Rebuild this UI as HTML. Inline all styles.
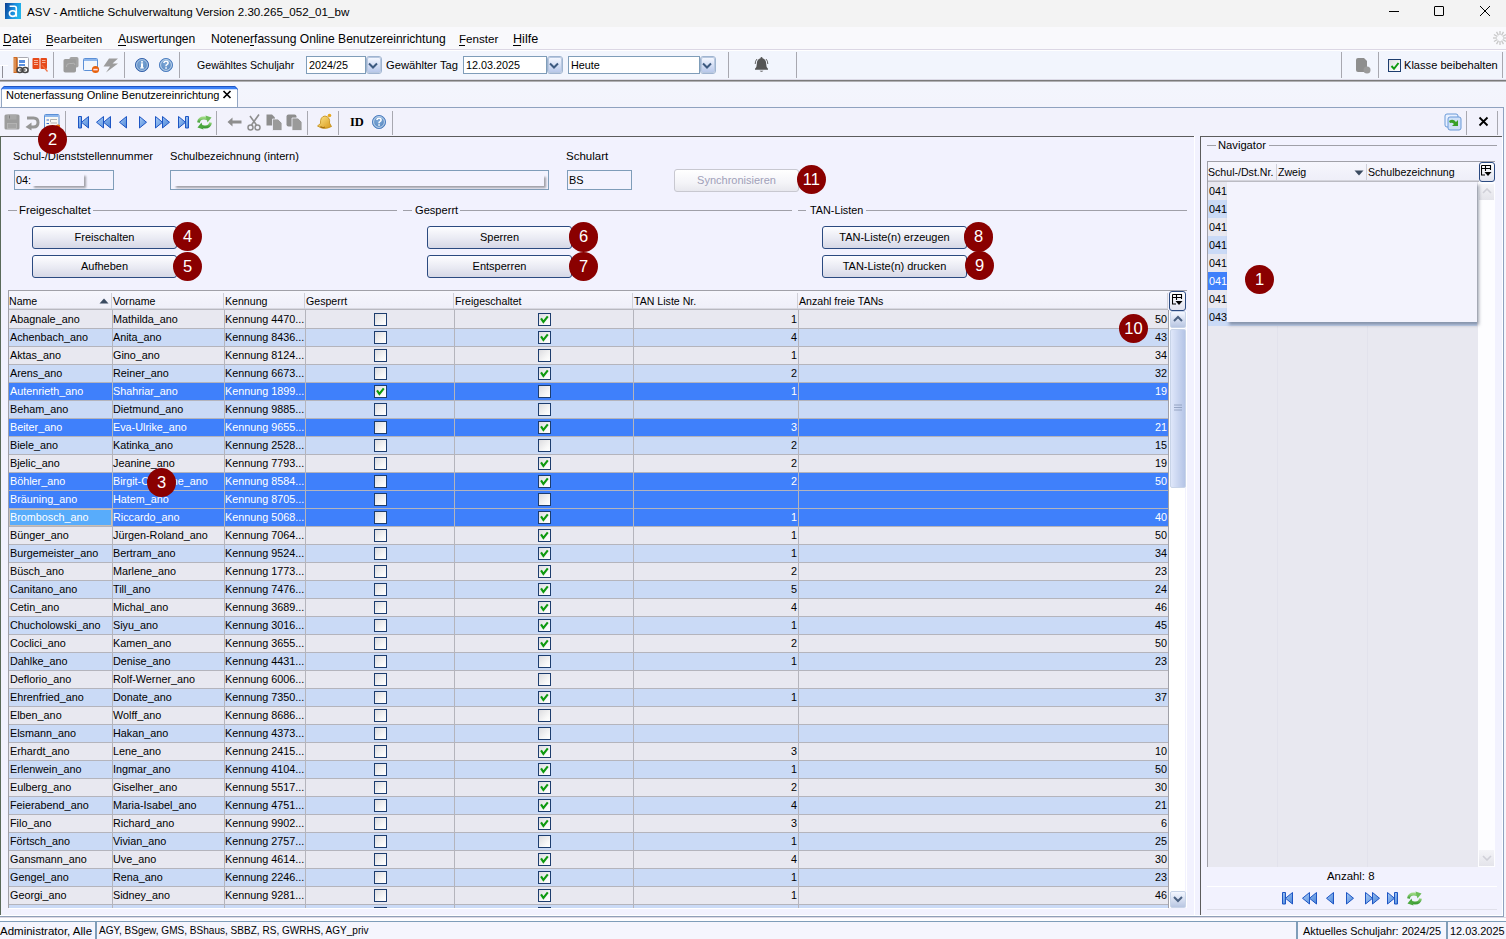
<!DOCTYPE html><html><head><meta charset="utf-8"><style>
html,body{margin:0;padding:0;}
body{width:1506px;height:939px;position:relative;overflow:hidden;background:#f2f2fe;font-family:'Liberation Sans',sans-serif;}
div{box-sizing:border-box;}
.ann{position:absolute;border-radius:50%;background:#8a0000;color:#fff;text-align:center;font-size:16.5px;font-family:'Liberation Sans',sans-serif;}
.btn{position:absolute;border:1px solid #2b4a80;border-radius:3px;background:linear-gradient(#fdfdff,#e9eaf3 55%,#d6d8e6);font-size:11px;text-align:center;color:#000;}
.cb{position:absolute;width:13px;height:13px;border:1px solid #1d3d6e;background:linear-gradient(135deg,#dcdce0,#f8f8f8 70%,#fff);}
.sep{position:absolute;width:1px;background:#a8a8b0;}
</style></head><body>
<div style="position:absolute;left:0px;top:0px;width:1506px;height:27px;background:#f3f3f3;"></div><svg style="position:absolute;left:5px;top:3px" width="16" height="16" viewBox="0 0 16 16"><defs><linearGradient id="lg" x1="0" y1="0" x2="1" y2="0.3"><stop offset="0" stop-color="#0a3d8f"/><stop offset="0.6" stop-color="#1a8ede"/><stop offset="1" stop-color="#22b4ea"/></linearGradient></defs><rect width="16" height="16" fill="url(#lg)"/><path d="M4.6 3.2 H9.4 Q11.3 3.2 11.3 5.2 V13.8" stroke="#fff" stroke-width="1.6" fill="none"/><ellipse cx="7.7" cy="10.6" rx="3.3" ry="2.8" stroke="#fff" stroke-width="1.6" fill="none"/></svg><div style="position:absolute;left:27px;top:6px;font-size:11.6px;line-height:1;color:#000;white-space:nowrap;">ASV - Amtliche Schulverwaltung Version 2.30.265_052_01_bw</div><div style="position:absolute;left:1389px;top:11px;width:10px;height:1px;background:#000;"></div><div style="position:absolute;left:1434px;top:6px;width:10px;height:10px;border:1px solid #000;border-radius:1px;"></div><svg style="position:absolute;left:1479px;top:5px" width="12" height="12" viewBox="0 0 12 12"><path d="M1 1 L11 11 M11 1 L1 11" stroke="#000" stroke-width="1"/></svg><div style="position:absolute;left:0px;top:27px;width:1506px;height:23px;background:#f9f9fc;border-bottom:1px solid #dcd7e4;"></div><div style="position:absolute;left:3px;top:33px;font-size:12.2px;line-height:1;color:#000;white-space:nowrap;">Datei</div><div style="position:absolute;left:46px;top:33px;font-size:11.6px;line-height:1;color:#000;white-space:nowrap;">Bearbeiten</div><div style="position:absolute;left:118px;top:33px;font-size:12.1px;line-height:1;color:#000;white-space:nowrap;">Auswertungen</div><div style="position:absolute;left:211px;top:33px;font-size:12.1px;line-height:1;color:#000;white-space:nowrap;">Notenerfassung Online Benutzereinrichtung</div><div style="position:absolute;left:459px;top:33px;font-size:11.6px;line-height:1;color:#000;white-space:nowrap;">Fenster</div><div style="position:absolute;left:513px;top:33px;font-size:12.6px;line-height:1;color:#000;white-space:nowrap;">Hilfe</div><div style="position:absolute;left:3px;top:45px;width:8px;height:1px;background:#000;"></div><div style="position:absolute;left:46px;top:45px;width:7px;height:1px;background:#000;"></div><div style="position:absolute;left:118px;top:45px;width:8px;height:1px;background:#000;"></div><div style="position:absolute;left:250px;top:45px;width:4px;height:1px;background:#000;"></div><div style="position:absolute;left:459px;top:45px;width:6px;height:1px;background:#000;"></div><div style="position:absolute;left:513px;top:45px;width:8px;height:1px;background:#000;"></div><svg style="position:absolute;left:1492px;top:28px" width="16" height="20" viewBox="0 0 16 20"><line x1="11.00" y1="10.00" x2="15.00" y2="10.00" stroke="#c8c8c8" stroke-width="1.3"/><line x1="10.60" y1="11.50" x2="14.06" y2="13.50" stroke="#c8c8c8" stroke-width="1.3"/><line x1="9.50" y1="12.60" x2="11.50" y2="16.06" stroke="#c8c8c8" stroke-width="1.3"/><line x1="8.00" y1="13.00" x2="8.00" y2="17.00" stroke="#c8c8c8" stroke-width="1.3"/><line x1="6.50" y1="12.60" x2="4.50" y2="16.06" stroke="#c8c8c8" stroke-width="1.3"/><line x1="5.40" y1="11.50" x2="1.94" y2="13.50" stroke="#c8c8c8" stroke-width="1.3"/><line x1="5.00" y1="10.00" x2="1.00" y2="10.00" stroke="#c8c8c8" stroke-width="1.3"/><line x1="5.40" y1="8.50" x2="1.94" y2="6.50" stroke="#c8c8c8" stroke-width="1.3"/><line x1="6.50" y1="7.40" x2="4.50" y2="3.94" stroke="#c8c8c8" stroke-width="1.3"/><line x1="8.00" y1="7.00" x2="8.00" y2="3.00" stroke="#c8c8c8" stroke-width="1.3"/><line x1="9.50" y1="7.40" x2="11.50" y2="3.94" stroke="#c8c8c8" stroke-width="1.3"/><line x1="10.60" y1="8.50" x2="14.06" y2="6.50" stroke="#c8c8c8" stroke-width="1.3"/></svg><div style="position:absolute;left:0px;top:50px;width:1506px;height:1px;background:#ffffff;"></div><div style="position:absolute;left:0px;top:51px;width:1506px;height:29px;background:#f2f5fd;"></div><div style="position:absolute;left:0px;top:79px;width:1506px;height:1px;background:#dcdae6;"></div><div style="position:absolute;left:0px;top:80px;width:1506px;height:1px;background:#7a7a7a;"></div><div style="position:absolute;left:0px;top:81px;width:1506px;height:1px;background:#b0b0b4;"></div><div style="position:absolute;left:2px;top:66px;width:1px;height:12px;background:#8e8e96;"></div><div style="position:absolute;left:0px;top:65px;width:8px;height:1px;background:#ffffff;"></div><div style="position:absolute;left:53px;top:52px;width:1px;height:26px;background:#a8a8b0;"></div><div style="position:absolute;left:124px;top:52px;width:1px;height:26px;background:#a8a8b0;"></div><div style="position:absolute;left:179px;top:52px;width:1px;height:26px;background:#a8a8b0;"></div><div style="position:absolute;left:728px;top:52px;width:1px;height:26px;background:#a8a8b0;"></div><div style="position:absolute;left:796px;top:52px;width:1px;height:26px;background:#a8a8b0;"></div><div style="position:absolute;left:1341px;top:52px;width:1px;height:26px;background:#a8a8b0;"></div><div style="position:absolute;left:1378px;top:52px;width:1px;height:26px;background:#a8a8b0;"></div><div style="position:absolute;left:1502px;top:52px;width:1px;height:26px;background:#a8a8b0;"></div><svg style="position:absolute;left:13px;top:57px" width="16" height="17" viewBox="0 0 16 17"><rect x="4.5" y="0.5" width="11" height="15" rx="0.8" fill="#fff" stroke="#a8a8b0"/><rect x="0.5" y="0" width="4" height="16" fill="#d06a20"/><path d="M0 2H3M0 4H3M0 6H3M0 8H3M0 10H3M0 12H3M0 14H3" stroke="#f0c8a0" stroke-width="0.8"/><rect x="6" y="3" width="6" height="3" fill="#5a90e0"/><rect x="6" y="7" width="6" height="2" fill="#5a90e0"/><rect x="4" y="10.5" width="5.5" height="5" rx="2.5" fill="none" stroke="#444" stroke-width="1.4"/><rect x="9.5" y="10.5" width="5.5" height="5" rx="2.5" fill="none" stroke="#444" stroke-width="1.4"/><path d="M6.5 13H12.5" stroke="#444" stroke-width="1.4"/></svg><svg style="position:absolute;left:32px;top:57px" width="17" height="17" viewBox="0 0 17 17"><rect x="0.5" y="1" width="7" height="11" rx="1" fill="#e64a1a"/><rect x="8.5" y="1" width="6.5" height="11" rx="1" fill="#e64a1a"/><path d="M2 3.5H6M2 5.5H6M2 7.5H6M10 3.5H13.5M10 5.5H13.5" stroke="#f8c0a8" stroke-width="0.9"/><path d="M10 8 L15.5 14.5" stroke="#f07040" stroke-width="1.2"/></svg><svg style="position:absolute;left:63px;top:57px" width="17" height="17" viewBox="0 0 17 17"><rect x="6.5" y="0" width="9" height="10.5" rx="1.8" fill="#a4a4a4"/><rect x="0.5" y="2" width="12.5" height="13.5" rx="1.8" fill="#9c9c9c"/><path d="M3.5 10 Q3 6.5 6.5 6.5 L9 6.5 Q11.5 5 12 8" stroke="#b4b4b4" stroke-width="1" fill="none"/></svg><svg style="position:absolute;left:83px;top:58px" width="17" height="16" viewBox="0 0 17 16"><rect x="0.5" y="0.5" width="14" height="12" rx="1" fill="#f2f6fc" stroke="#5b8fd6"/><rect x="1" y="1" width="13" height="2" fill="#8db6ec"/><circle cx="12.5" cy="11.5" r="3.6" fill="#e8620c"/><rect x="10.3" y="10.8" width="4.4" height="1.6" fill="#fde"/></svg><svg style="position:absolute;left:103px;top:58px" width="16" height="15" viewBox="0 0 16 15"><path d="M6 0.5 H15 L9.5 5.5 H15 L3 14.5 L7 8.5 H0.5 Z" fill="#9c9c9c"/></svg><svg style="position:absolute;left:135px;top:58px" width="15" height="15" viewBox="0 0 15 15"><defs><radialGradient id="bi" cx="0.45" cy="0.4" r="0.6"><stop offset="0" stop-color="#7aa6d6"/><stop offset="1" stop-color="#5a88c0"/></radialGradient></defs><circle cx="7" cy="7" r="6.6" fill="url(#bi)" stroke="#2f5ca8" stroke-width="0.9"/><circle cx="7" cy="7" r="5.4" fill="none" stroke="#c8dcf0" stroke-width="0.7"/><rect x="6" y="5.3" width="2" height="4.5" fill="#fff"/><rect x="5.2" y="9.3" width="3.6" height="1.2" fill="#fff"/><rect x="6" y="3.2" width="2" height="1.3" fill="#fff"/></svg><svg style="position:absolute;left:159px;top:58px" width="15" height="15" viewBox="0 0 15 15"><circle cx="7" cy="7" r="6.6" fill="url(#bi)" stroke="#4a7cc0" stroke-width="0.9"/><circle cx="7" cy="7" r="5.4" fill="none" stroke="#d8e8f8" stroke-width="0.8"/><path d="M4.9 5 Q5 3.2 7 3.2 Q9.1 3.2 9.1 4.9 Q9.1 6 7.9 6.6 Q7 7 7 8.2" stroke="#fff" stroke-width="1.5" fill="none"/><rect x="6.2" y="9.3" width="1.7" height="1.4" fill="#fff"/></svg><div style="position:absolute;left:197px;top:60px;font-size:10.6px;line-height:1;color:#000;white-space:nowrap;">Gewähltes Schuljahr</div><div style="position:absolute;left:306px;top:56px;width:60px;height:18px;background:#fff;border:1px solid #7f9db9;"></div><div style="position:absolute;left:309px;top:60px;font-size:10.8px;line-height:1;color:#000;white-space:nowrap;">2024/25</div><div style="position:absolute;left:366px;top:56px;width:16px;height:18px;border:1px solid #9fb4d0;border-radius:3px;background:#fff;"></div><div style="position:absolute;left:367px;top:57px;width:14px;height:16px;border:1px solid #b8c8e0;border-radius:2px;background:linear-gradient(#f4f7ff,#b8c8ea);"></div><svg style="position:absolute;left:368px;top:62px" width="10" height="8" viewBox="0 0 10 8"><path d="M1 1.5 L5 5.5 L9 1.5" stroke="#3d5a80" stroke-width="2" fill="none"/></svg><div style="position:absolute;left:386px;top:60px;font-size:11.2px;line-height:1;color:#000;white-space:nowrap;">Gewählter Tag</div><div style="position:absolute;left:463px;top:56px;width:84px;height:18px;background:#fff;border:1px solid #7f9db9;"></div><div style="position:absolute;left:466px;top:60px;font-size:10.8px;line-height:1;color:#000;white-space:nowrap;">12.03.2025</div><div style="position:absolute;left:547px;top:56px;width:16px;height:18px;border:1px solid #9fb4d0;border-radius:3px;background:#fff;"></div><div style="position:absolute;left:548px;top:57px;width:14px;height:16px;border:1px solid #b8c8e0;border-radius:2px;background:linear-gradient(#f4f7ff,#b8c8ea);"></div><svg style="position:absolute;left:549px;top:62px" width="10" height="8" viewBox="0 0 10 8"><path d="M1 1.5 L5 5.5 L9 1.5" stroke="#3d5a80" stroke-width="2" fill="none"/></svg><div style="position:absolute;left:568px;top:56px;width:132px;height:18px;background:#fff;border:1px solid #7f9db9;"></div><div style="position:absolute;left:571px;top:60px;font-size:10.8px;line-height:1;color:#000;white-space:nowrap;">Heute</div><div style="position:absolute;left:700px;top:56px;width:16px;height:18px;border:1px solid #9fb4d0;border-radius:3px;background:#fff;"></div><div style="position:absolute;left:701px;top:57px;width:14px;height:16px;border:1px solid #b8c8e0;border-radius:2px;background:linear-gradient(#f4f7ff,#b8c8ea);"></div><svg style="position:absolute;left:702px;top:62px" width="10" height="8" viewBox="0 0 10 8"><path d="M1 1.5 L5 5.5 L9 1.5" stroke="#3d5a80" stroke-width="2" fill="none"/></svg><svg style="position:absolute;left:753px;top:56px" width="17" height="18" viewBox="0 0 17 18"><path d="M8.5 1 Q9.5 1 9.5 2.3 Q13.2 3.2 13.2 8 Q13.2 11.5 15 12.8 V13.8 H2 V12.8 Q3.8 11.5 3.8 8 Q3.8 3.2 7.5 2.3 Q7.5 1 8.5 1Z" fill="#555"/><path d="M6.6 14.8 Q8.5 16.8 10.4 14.8Z" fill="#555"/><path d="M2.2 8 Q2.2 4.8 4 3M14.8 8 Q14.8 4.8 13 3" stroke="#666" stroke-width="1" fill="none"/></svg><svg style="position:absolute;left:1355px;top:57px" width="16" height="17" viewBox="0 0 16 17"><path d="M1 3 Q1 1 3 1 H9 L12 4 V13 Q12 15 10 15 H3 Q1 15 1 13Z" fill="#8e8e8e"/><circle cx="12" cy="13" r="3.5" fill="#9a9a9a"/></svg><div class="cb" style="left:1388px;top:59px;border-color:#1d3d6e;"></div><svg style="position:absolute;left:1390px;top:61px" width="10" height="10" viewBox="0 0 10 10"><path d="M1.5 5 L4 7.8 L8.5 2" stroke="#109a10" stroke-width="2" fill="none"/></svg><div style="position:absolute;left:1404px;top:60px;font-size:11.1px;line-height:1;color:#000;white-space:nowrap;">Klasse beibehalten</div><div style="position:absolute;left:0px;top:82px;width:1506px;height:25px;background:linear-gradient(#f3f5fd,#f3f4fc);"></div><svg style="position:absolute;left:0px;top:85px" width="240" height="23" viewBox="0 0 240 23"><path d="M1 23 V4 L4 1 H235 L238 4 V23Z" fill="#fff"/><rect x="1" y="4" width="1" height="19" fill="#93a6c3"/><rect x="237" y="4" width="1" height="19" fill="#93a6c3"/><path d="M1 4.2 L4 1 H235 L238 4.2Z" fill="#3a80f6"/><path d="M1.3 4.2 L4.2 1.5 H234.8 L237.7 4.2" stroke="#1f56c4" stroke-width="1" fill="none"/></svg><div style="position:absolute;left:0px;top:107px;width:1504px;height:1px;background:#8fa2bf;"></div><div style="position:absolute;left:6px;top:90px;font-size:11px;line-height:1;color:#000;white-space:nowrap;">Notenerfassung Online Benutzereinrichtung</div><svg style="position:absolute;left:222px;top:90px" width="10" height="9" viewBox="0 0 10 9"><path d="M1.5 1 L8.5 8 M8.5 1 L1.5 8" stroke="#000" stroke-width="1.7"/></svg><div style="position:absolute;left:0px;top:108px;width:1503px;height:28px;background:#f2f2fc;"></div><div style="position:absolute;left:0px;top:136px;width:1196px;height:1px;background:#5c5c5c;"></div><div style="position:absolute;left:65px;top:111px;width:1px;height:24px;background:#a8a8b0;"></div><div style="position:absolute;left:216px;top:111px;width:1px;height:24px;background:#a8a8b0;"></div><div style="position:absolute;left:307px;top:111px;width:1px;height:24px;background:#a8a8b0;"></div><div style="position:absolute;left:338px;top:111px;width:1px;height:24px;background:#a8a8b0;"></div><div style="position:absolute;left:392px;top:111px;width:1px;height:24px;background:#a8a8b0;"></div><div style="position:absolute;left:1466px;top:111px;width:1px;height:24px;background:#a8a8b0;"></div><div style="position:absolute;left:1497px;top:111px;width:1px;height:24px;background:#a8a8b0;"></div><svg style="position:absolute;left:4px;top:114px" width="16" height="16" viewBox="0 0 16 16"><path d="M0.5 2 Q0.5 0.5 2 0.5 H14 Q15.5 0.5 15.5 2 V14 Q15.5 15.5 14 15.5 H2 Q0.5 15.5 0.5 14Z" fill="#9c9c9c"/><rect x="3.5" y="0.5" width="9" height="5" fill="#a8a8a8"/><rect x="5" y="1.5" width="1" height="3" fill="#808080"/><rect x="3.5" y="9.5" width="9" height="5" fill="#a4a4a4" stroke="#b8b8b8" stroke-width="0.8"/></svg><svg style="position:absolute;left:25px;top:115px" width="15" height="16" viewBox="0 0 15 16"><path d="M2 3 H8.5 Q13 3 13 7.5 Q13 12 8.5 12 H6" stroke="#969696" stroke-width="3" fill="none"/><path d="M0.5 12 L6.5 7.5 V15.5Z" fill="#969696"/></svg><svg style="position:absolute;left:44px;top:114px" width="16" height="16" viewBox="0 0 16 16"><rect x="0.5" y="0.5" width="14.5" height="15" rx="1" fill="#f8f8f4" stroke="#5b8fd6"/><rect x="1" y="1" width="13.5" height="2" fill="#8db6ec"/><path d="M2.5 6H5M2.5 9.5H5" stroke="#3a6cd0" stroke-width="1.2"/><path d="M6.5 5.5H13M6.5 5.5V8M6.5 9H13" stroke="#aaa" stroke-width="0.9" fill="none"/><circle cx="14" cy="13" r="2.5" fill="#e8700c"/></svg><svg style="position:absolute;left:78px;top:116px" width="12" height="13" viewBox="0 0 12 13"><defs><linearGradient id="nb" x1="0" y1="0" x2="1" y2="1"><stop offset="0" stop-color="#a8ccf6"/><stop offset="1" stop-color="#4a84d8"/></linearGradient></defs><rect x="0.5" y="0.5" width="3" height="11.5" fill="url(#nb)" stroke="#1d55c4" stroke-width="1" stroke-linejoin="round"/><path d="M10.5 0.5 V12 L3.5 6.25Z" fill="url(#nb)" stroke="#1d55c4" stroke-width="1" stroke-linejoin="round"/></svg><svg style="position:absolute;left:96px;top:116px" width="16" height="13" viewBox="0 0 16 13"><path d="M7.5 0.5 V12 L0.5 6.25Z M14.5 0.5 V12 L7.5 6.25Z" fill="url(#nb)" stroke="#1d55c4" stroke-width="1" stroke-linejoin="round"/></svg><svg style="position:absolute;left:119px;top:116px" width="9" height="13" viewBox="0 0 9 13"><path d="M7.5 0.5 V12 L0.5 6.25Z" fill="url(#nb)" stroke="#1d55c4" stroke-width="1" stroke-linejoin="round"/></svg><svg style="position:absolute;left:139px;top:116px" width="9" height="13" viewBox="0 0 9 13"><path d="M0.5 0.5 V12 L7.5 6.25Z" fill="url(#nb)" stroke="#1d55c4" stroke-width="1" stroke-linejoin="round"/></svg><svg style="position:absolute;left:155px;top:116px" width="16" height="13" viewBox="0 0 16 13"><path d="M0.5 0.5 V12 L7.5 6.25Z M7.5 0.5 V12 L14.5 6.25Z" fill="url(#nb)" stroke="#1d55c4" stroke-width="1" stroke-linejoin="round"/></svg><svg style="position:absolute;left:178px;top:116px" width="12" height="13" viewBox="0 0 12 13"><path d="M0.5 0.5 V12 L7.5 6.25Z" fill="url(#nb)" stroke="#1d55c4" stroke-width="1" stroke-linejoin="round"/><rect x="7.5" y="0.5" width="3" height="11.5" fill="url(#nb)" stroke="#1d55c4" stroke-width="1" stroke-linejoin="round"/></svg><svg style="position:absolute;left:196px;top:114px" width="17" height="17" viewBox="0 0 17 17"><defs><linearGradient id="gr" x1="0" y1="0" x2="0" y2="1"><stop offset="0" stop-color="#9ad880"/><stop offset="1" stop-color="#3c9c34"/></linearGradient></defs><path d="M2.5 8.5 Q3 4 8 4 Q10 4 11.5 5" stroke="url(#gr)" stroke-width="2.8" fill="none"/><path d="M9.5 1.5 L15.5 3.5 L11.5 8.5Z" fill="#6cbc58"/><path d="M14.5 8.5 Q14 13 9 13 Q7 13 5.5 12" stroke="url(#gr)" stroke-width="2.8" fill="none"/><path d="M7.5 15.5 L1.5 13.5 L5.5 8.5Z" fill="#4aa83e"/></svg><svg style="position:absolute;left:227px;top:117px" width="15" height="10" viewBox="0 0 15 10"><path d="M0.5 5 L5.5 0.5 V3.5 H14.5 V6.5 H5.5 V9.5Z" fill="#8e8e8e"/></svg><svg style="position:absolute;left:247px;top:114px" width="14" height="17" viewBox="0 0 14 17"><path d="M4.5 11 L12 0.5 M9.5 11 L3 2" stroke="#8e8e8e" stroke-width="1.6" fill="none"/><circle cx="3.5" cy="13.5" r="2.5" fill="none" stroke="#8e8e8e" stroke-width="1.5"/><circle cx="10.5" cy="13.5" r="2.5" fill="none" stroke="#8e8e8e" stroke-width="1.5"/></svg><svg style="position:absolute;left:266px;top:114px" width="17" height="17" viewBox="0 0 17 17"><path d="M0.5 0.5 H6 L9 3.5 V11.5 H0.5Z" fill="#8e8e8e"/><path d="M6.5 5 H12 L16 9 V16.5 H6.5Z" fill="#9a9a9a" stroke="#f2f3fb" stroke-width="0.8"/></svg><svg style="position:absolute;left:286px;top:114px" width="17" height="17" viewBox="0 0 17 17"><rect x="0.5" y="0.5" width="10" height="12" rx="2" fill="#8e8e8e"/><path d="M6 4 H12 L16 8 V16.5 H6Z" fill="#9a9a9a" stroke="#f2f3fb" stroke-width="0.8"/></svg><svg style="position:absolute;left:316px;top:113px" width="17" height="18" viewBox="0 0 17 18"><defs><linearGradient id="bg2" x1="0" y1="0" x2="1" y2="1"><stop offset="0" stop-color="#fde890"/><stop offset="1" stop-color="#d89818"/></linearGradient></defs><path d="M9 3 Q14.5 4 13.5 10 L15.5 13.5 Q8 17.5 1.5 13 L4.5 10.5 Q4 3.5 9 3Z" fill="url(#bg2)" stroke="#c08a10" stroke-width="0.8"/><circle cx="13.5" cy="2.5" r="1.8" fill="#e8a820"/><path d="M4.5 13.5 Q6.5 15.5 9 14" stroke="#a87010" stroke-width="1.2" fill="none"/></svg><div style="position:absolute;left:350px;top:116px;font-family:'Liberation Serif',serif;font-weight:bold;font-size:12.5px;line-height:1;color:#000;">ID</div><svg style="position:absolute;left:372px;top:115px" width="15" height="15" viewBox="0 0 15 15"><circle cx="7" cy="7" r="6.6" fill="url(#bi)" stroke="#4a7cc0" stroke-width="0.9"/><circle cx="7" cy="7" r="5.4" fill="none" stroke="#d8e8f8" stroke-width="0.8"/><path d="M4.9 5 Q5 3.2 7 3.2 Q9.1 3.2 9.1 4.9 Q9.1 6 7.9 6.6 Q7 7 7 8.2" stroke="#fff" stroke-width="1.5" fill="none"/><rect x="6.2" y="9.3" width="1.7" height="1.4" fill="#fff"/></svg><svg style="position:absolute;left:1444px;top:113px" width="18" height="18" viewBox="0 0 18 18"><rect x="1" y="1" width="13" height="13" rx="2" fill="#e8f0ff" stroke="#6a9ad8"/><rect x="4" y="4" width="13" height="13" rx="2" fill="#cfe0f8" stroke="#6a9ad8"/><path d="M5 8 Q9 5 12 9 L14 7 V13 H8 L10 11 Q8 9 6 10Z" fill="#38a028"/></svg><svg style="position:absolute;left:1478px;top:116px" width="11" height="11" viewBox="0 0 11 11"><path d="M1.5 1.5 L9.5 9.5 M9.5 1.5 L1.5 9.5" stroke="#000" stroke-width="1.8"/></svg><div style="position:absolute;left:0px;top:137px;width:1194px;height:779px;background:#f2f2fe;"></div><div style="position:absolute;left:0px;top:136px;width:1px;height:780px;background:#5a6a5a;"></div><div style="position:absolute;left:13px;top:151px;font-size:11.2px;line-height:1;color:#000;white-space:nowrap;">Schul-/Dienststellennummer</div><div style="position:absolute;left:170px;top:151px;font-size:11.1px;line-height:1;color:#000;white-space:nowrap;">Schulbezeichnung (intern)</div><div style="position:absolute;left:566px;top:151px;font-size:11.5px;line-height:1;color:#000;white-space:nowrap;">Schulart</div><div style="position:absolute;left:14px;top:170px;width:100px;height:20px;background:#f3f3fe;border:1px solid #7f9db9;"></div><div style="position:absolute;left:16px;top:175px;font-size:10.9px;line-height:1;color:#000;white-space:nowrap;">04:</div><div style="position:absolute;left:32px;top:174px;width:52px;height:12px;background:#f3f3fe;box-shadow:2px 2px 2px #a0a0a8;"></div><div style="position:absolute;left:170px;top:170px;width:379px;height:20px;background:#f3f3fe;border:1px solid #7f9db9;"></div><div style="position:absolute;left:174px;top:175px;width:370px;height:11px;background:#f3f3fe;box-shadow:2px 2px 2px #a0a0a8;"></div><div style="position:absolute;left:567px;top:170px;width:65px;height:20px;background:#f3f3fe;border:1px solid #7f9db9;"></div><div style="position:absolute;left:569px;top:175px;font-size:10.9px;line-height:1;color:#000;white-space:nowrap;">BS</div><div class="btn" style="left:674px;top:169px;width:125px;height:23px;line-height:21px;border-color:#c8c8d0;background:linear-gradient(#ffffff,#f4f4f8 60%,#e8e8ee);color:#a0a0b8;">Synchronisieren</div><div style="position:absolute;left:8px;top:210px;width:9px;height:1px;background:#a0a0a8;"></div><div style="position:absolute;left:19px;top:205px;font-size:11.4px;line-height:1;color:#000;white-space:nowrap;">Freigeschaltet</div><div style="position:absolute;left:93px;top:210px;width:304px;height:1px;background:#a0a0a8;"></div><div style="position:absolute;left:403px;top:210px;width:9px;height:1px;background:#a0a0a8;"></div><div style="position:absolute;left:415px;top:205px;font-size:11.1px;line-height:1;color:#000;white-space:nowrap;">Gesperrt</div><div style="position:absolute;left:460px;top:210px;width:332px;height:1px;background:#a0a0a8;"></div><div style="position:absolute;left:798px;top:210px;width:8px;height:1px;background:#a0a0a8;"></div><div style="position:absolute;left:810px;top:205px;font-size:10.8px;line-height:1;color:#000;white-space:nowrap;">TAN-Listen</div><div style="position:absolute;left:866px;top:210px;width:321px;height:1px;background:#a0a0a8;"></div><div class="btn" style="left:32px;top:226px;width:145px;height:23px;line-height:21px;">Freischalten</div><div class="btn" style="left:32px;top:255px;width:145px;height:23px;line-height:21px;">Aufheben</div><div class="btn" style="left:427px;top:226px;width:145px;height:23px;line-height:21px;">Sperren</div><div class="btn" style="left:427px;top:255px;width:145px;height:23px;line-height:21px;">Entsperren</div><div class="btn" style="left:822px;top:226px;width:145px;height:23px;line-height:21px;">TAN-Liste(n) erzeugen</div><div class="btn" style="left:822px;top:255px;width:145px;height:23px;line-height:21px;">TAN-Liste(n) drucken</div><div style="position:absolute;left:8px;top:290px;width:1179px;height:1px;background:#a0a0a8;"></div><div style="position:absolute;left:8px;top:290px;width:1px;height:618px;background:#a0a0a8;"></div><div style="position:absolute;left:9px;top:291px;width:1159px;height:19px;background:linear-gradient(#f6f6fd,#eeeef8);"></div><div style="position:absolute;left:9px;top:308px;width:1159px;height:1px;background:#d8d8e0;"></div><div style="position:absolute;left:9px;top:309px;width:1159px;height:1px;background:#b8b8c0;"></div><div style="position:absolute;left:9px;top:296px;font-size:10.6px;line-height:1;color:#000;white-space:nowrap;">Name</div><div style="position:absolute;left:113px;top:296px;font-size:10.6px;line-height:1;color:#000;white-space:nowrap;">Vorname</div><div style="position:absolute;left:111px;top:293px;width:1px;height:16px;background:#d0d0d8;"></div><div style="position:absolute;left:225px;top:296px;font-size:10.6px;line-height:1;color:#000;white-space:nowrap;">Kennung</div><div style="position:absolute;left:223px;top:293px;width:1px;height:16px;background:#d0d0d8;"></div><div style="position:absolute;left:306px;top:296px;font-size:10.6px;line-height:1;color:#000;white-space:nowrap;">Gesperrt</div><div style="position:absolute;left:304px;top:293px;width:1px;height:16px;background:#d0d0d8;"></div><div style="position:absolute;left:455px;top:296px;font-size:10.6px;line-height:1;color:#000;white-space:nowrap;">Freigeschaltet</div><div style="position:absolute;left:453px;top:293px;width:1px;height:16px;background:#d0d0d8;"></div><div style="position:absolute;left:634px;top:296px;font-size:10.6px;line-height:1;color:#000;white-space:nowrap;">TAN Liste Nr.</div><div style="position:absolute;left:632px;top:293px;width:1px;height:16px;background:#d0d0d8;"></div><div style="position:absolute;left:799px;top:296px;font-size:10.6px;line-height:1;color:#000;white-space:nowrap;">Anzahl freie TANs</div><div style="position:absolute;left:797px;top:293px;width:1px;height:16px;background:#d0d0d8;"></div><svg style="position:absolute;left:99px;top:298px" width="10" height="6" viewBox="0 0 10 6"><path d="M0.5 5.5 L5 0.5 L9.5 5.5Z" fill="#3a4a60"/></svg><div style="position:absolute;left:1167px;top:293px;width:1px;height:16px;background:#d0d0d8;"></div><div style="position:absolute;left:1169px;top:291px;width:17px;height:20px;border:1px solid #2b4a80;border-radius:3px;background:linear-gradient(#fff,#e0e2ee);"></div><svg style="position:absolute;left:1172px;top:294px" width="11" height="13" viewBox="0 0 11 13"><path d="M0.5 0.5 H9.5 V5 M0.5 0.5 V10 H4 M0.5 3.5 H9.5 M4.5 0.5 V6" stroke="#000" stroke-width="1.1" fill="none"/><path d="M3.5 7 H10.5 L7 11Z" fill="#000"/></svg><div style="position:absolute;left:9px;top:310px;width:1159px;height:598px;overflow:hidden;"><div style="position:absolute;left:0;top:0;width:1159px;height:18px;background:#e8e8f0;"></div><div style="position:absolute;left:103px;top:0px;width:1px;height:18px;background:#b4b4bc;"></div><div style="position:absolute;left:215px;top:0px;width:1px;height:18px;background:#b4b4bc;"></div><div style="position:absolute;left:296px;top:0px;width:1px;height:18px;background:#b4b4bc;"></div><div style="position:absolute;left:445px;top:0px;width:1px;height:18px;background:#b4b4bc;"></div><div style="position:absolute;left:624px;top:0px;width:1px;height:18px;background:#b4b4bc;"></div><div style="position:absolute;left:789px;top:0px;width:1px;height:18px;background:#b4b4bc;"></div><div style="position:absolute;left:1px;top:4px;font-size:10.8px;line-height:1;color:#000;white-space:nowrap;">Abagnale_ano</div><div style="position:absolute;left:104px;top:4px;font-size:10.8px;line-height:1;color:#000;white-space:nowrap;">Mathilda_ano</div><div style="position:absolute;left:216px;top:4px;font-size:10.8px;line-height:1;color:#000;white-space:nowrap;">Kennung 4470...</div><div class="cb" style="left:365px;top:3px;"></div><div class="cb" style="left:529px;top:3px;"></div><svg style="position:absolute;left:531px;top:5px" width="9" height="9" viewBox="0 0 9 9"><path d="M1 3.4 L3.4 6.9 L7.8 1.4" stroke="#0e9a0e" stroke-width="2.1" fill="none"/></svg><div style="position:absolute;left:624px;top:4px;width:164px;text-align:right;font-size:10.8px;line-height:1;color:#000;">1</div><div style="position:absolute;left:789px;top:4px;width:369px;text-align:right;font-size:10.8px;line-height:1;color:#000;">50</div><div style="position:absolute;left:0;top:18px;width:1159px;height:18px;background:#cadaf6;border-top:1px solid #b4b4bc;"></div><div style="position:absolute;left:103px;top:18px;width:1px;height:18px;background:#b4b4bc;"></div><div style="position:absolute;left:215px;top:18px;width:1px;height:18px;background:#b4b4bc;"></div><div style="position:absolute;left:296px;top:18px;width:1px;height:18px;background:#b4b4bc;"></div><div style="position:absolute;left:445px;top:18px;width:1px;height:18px;background:#b4b4bc;"></div><div style="position:absolute;left:624px;top:18px;width:1px;height:18px;background:#b4b4bc;"></div><div style="position:absolute;left:789px;top:18px;width:1px;height:18px;background:#b4b4bc;"></div><div style="position:absolute;left:1px;top:22px;font-size:10.8px;line-height:1;color:#000;white-space:nowrap;">Achenbach_ano</div><div style="position:absolute;left:104px;top:22px;font-size:10.8px;line-height:1;color:#000;white-space:nowrap;">Anita_ano</div><div style="position:absolute;left:216px;top:22px;font-size:10.8px;line-height:1;color:#000;white-space:nowrap;">Kennung 8436...</div><div class="cb" style="left:365px;top:21px;"></div><div class="cb" style="left:529px;top:21px;"></div><svg style="position:absolute;left:531px;top:23px" width="9" height="9" viewBox="0 0 9 9"><path d="M1 3.4 L3.4 6.9 L7.8 1.4" stroke="#0e9a0e" stroke-width="2.1" fill="none"/></svg><div style="position:absolute;left:624px;top:22px;width:164px;text-align:right;font-size:10.8px;line-height:1;color:#000;">4</div><div style="position:absolute;left:789px;top:22px;width:369px;text-align:right;font-size:10.8px;line-height:1;color:#000;">43</div><div style="position:absolute;left:0;top:36px;width:1159px;height:18px;background:#e8e8f0;border-top:1px solid #b4b4bc;"></div><div style="position:absolute;left:103px;top:36px;width:1px;height:18px;background:#b4b4bc;"></div><div style="position:absolute;left:215px;top:36px;width:1px;height:18px;background:#b4b4bc;"></div><div style="position:absolute;left:296px;top:36px;width:1px;height:18px;background:#b4b4bc;"></div><div style="position:absolute;left:445px;top:36px;width:1px;height:18px;background:#b4b4bc;"></div><div style="position:absolute;left:624px;top:36px;width:1px;height:18px;background:#b4b4bc;"></div><div style="position:absolute;left:789px;top:36px;width:1px;height:18px;background:#b4b4bc;"></div><div style="position:absolute;left:1px;top:40px;font-size:10.8px;line-height:1;color:#000;white-space:nowrap;">Aktas_ano</div><div style="position:absolute;left:104px;top:40px;font-size:10.8px;line-height:1;color:#000;white-space:nowrap;">Gino_ano</div><div style="position:absolute;left:216px;top:40px;font-size:10.8px;line-height:1;color:#000;white-space:nowrap;">Kennung 8124...</div><div class="cb" style="left:365px;top:39px;"></div><div class="cb" style="left:529px;top:39px;"></div><div style="position:absolute;left:624px;top:40px;width:164px;text-align:right;font-size:10.8px;line-height:1;color:#000;">1</div><div style="position:absolute;left:789px;top:40px;width:369px;text-align:right;font-size:10.8px;line-height:1;color:#000;">34</div><div style="position:absolute;left:0;top:54px;width:1159px;height:18px;background:#cadaf6;border-top:1px solid #b4b4bc;"></div><div style="position:absolute;left:103px;top:54px;width:1px;height:18px;background:#b4b4bc;"></div><div style="position:absolute;left:215px;top:54px;width:1px;height:18px;background:#b4b4bc;"></div><div style="position:absolute;left:296px;top:54px;width:1px;height:18px;background:#b4b4bc;"></div><div style="position:absolute;left:445px;top:54px;width:1px;height:18px;background:#b4b4bc;"></div><div style="position:absolute;left:624px;top:54px;width:1px;height:18px;background:#b4b4bc;"></div><div style="position:absolute;left:789px;top:54px;width:1px;height:18px;background:#b4b4bc;"></div><div style="position:absolute;left:1px;top:58px;font-size:10.8px;line-height:1;color:#000;white-space:nowrap;">Arens_ano</div><div style="position:absolute;left:104px;top:58px;font-size:10.8px;line-height:1;color:#000;white-space:nowrap;">Reiner_ano</div><div style="position:absolute;left:216px;top:58px;font-size:10.8px;line-height:1;color:#000;white-space:nowrap;">Kennung 6673...</div><div class="cb" style="left:365px;top:57px;"></div><div class="cb" style="left:529px;top:57px;"></div><svg style="position:absolute;left:531px;top:59px" width="9" height="9" viewBox="0 0 9 9"><path d="M1 3.4 L3.4 6.9 L7.8 1.4" stroke="#0e9a0e" stroke-width="2.1" fill="none"/></svg><div style="position:absolute;left:624px;top:58px;width:164px;text-align:right;font-size:10.8px;line-height:1;color:#000;">2</div><div style="position:absolute;left:789px;top:58px;width:369px;text-align:right;font-size:10.8px;line-height:1;color:#000;">32</div><div style="position:absolute;left:0;top:72px;width:1159px;height:18px;background:#3f80fb;border-top:1px solid #b4b4bc;"></div><div style="position:absolute;left:103px;top:72px;width:1px;height:18px;background:#b4b4bc;"></div><div style="position:absolute;left:215px;top:72px;width:1px;height:18px;background:#b4b4bc;"></div><div style="position:absolute;left:296px;top:72px;width:1px;height:18px;background:#b4b4bc;"></div><div style="position:absolute;left:445px;top:72px;width:1px;height:18px;background:#b4b4bc;"></div><div style="position:absolute;left:624px;top:72px;width:1px;height:18px;background:#b4b4bc;"></div><div style="position:absolute;left:789px;top:72px;width:1px;height:18px;background:#b4b4bc;"></div><div style="position:absolute;left:1px;top:76px;font-size:10.8px;line-height:1;color:#fff;white-space:nowrap;">Autenrieth_ano</div><div style="position:absolute;left:104px;top:76px;font-size:10.8px;line-height:1;color:#fff;white-space:nowrap;">Shahriar_ano</div><div style="position:absolute;left:216px;top:76px;font-size:10.8px;line-height:1;color:#fff;white-space:nowrap;">Kennung 1899...</div><div class="cb" style="left:365px;top:75px;"></div><svg style="position:absolute;left:367px;top:77px" width="9" height="9" viewBox="0 0 9 9"><path d="M1 3.4 L3.4 6.9 L7.8 1.4" stroke="#0e9a0e" stroke-width="2.1" fill="none"/></svg><div class="cb" style="left:529px;top:75px;"></div><div style="position:absolute;left:624px;top:76px;width:164px;text-align:right;font-size:10.8px;line-height:1;color:#fff;">1</div><div style="position:absolute;left:789px;top:76px;width:369px;text-align:right;font-size:10.8px;line-height:1;color:#fff;">19</div><div style="position:absolute;left:0;top:90px;width:1159px;height:18px;background:#cadaf6;border-top:1px solid #b4b4bc;"></div><div style="position:absolute;left:103px;top:90px;width:1px;height:18px;background:#b4b4bc;"></div><div style="position:absolute;left:215px;top:90px;width:1px;height:18px;background:#b4b4bc;"></div><div style="position:absolute;left:296px;top:90px;width:1px;height:18px;background:#b4b4bc;"></div><div style="position:absolute;left:445px;top:90px;width:1px;height:18px;background:#b4b4bc;"></div><div style="position:absolute;left:624px;top:90px;width:1px;height:18px;background:#b4b4bc;"></div><div style="position:absolute;left:789px;top:90px;width:1px;height:18px;background:#b4b4bc;"></div><div style="position:absolute;left:1px;top:94px;font-size:10.8px;line-height:1;color:#000;white-space:nowrap;">Beham_ano</div><div style="position:absolute;left:104px;top:94px;font-size:10.8px;line-height:1;color:#000;white-space:nowrap;">Dietmund_ano</div><div style="position:absolute;left:216px;top:94px;font-size:10.8px;line-height:1;color:#000;white-space:nowrap;">Kennung 9885...</div><div class="cb" style="left:365px;top:93px;"></div><div class="cb" style="left:529px;top:93px;"></div><div style="position:absolute;left:0;top:108px;width:1159px;height:18px;background:#3f80fb;border-top:1px solid #b4b4bc;"></div><div style="position:absolute;left:103px;top:108px;width:1px;height:18px;background:#b4b4bc;"></div><div style="position:absolute;left:215px;top:108px;width:1px;height:18px;background:#b4b4bc;"></div><div style="position:absolute;left:296px;top:108px;width:1px;height:18px;background:#b4b4bc;"></div><div style="position:absolute;left:445px;top:108px;width:1px;height:18px;background:#b4b4bc;"></div><div style="position:absolute;left:624px;top:108px;width:1px;height:18px;background:#b4b4bc;"></div><div style="position:absolute;left:789px;top:108px;width:1px;height:18px;background:#b4b4bc;"></div><div style="position:absolute;left:1px;top:112px;font-size:10.8px;line-height:1;color:#fff;white-space:nowrap;">Beiter_ano</div><div style="position:absolute;left:104px;top:112px;font-size:10.8px;line-height:1;color:#fff;white-space:nowrap;">Eva-Ulrike_ano</div><div style="position:absolute;left:216px;top:112px;font-size:10.8px;line-height:1;color:#fff;white-space:nowrap;">Kennung 9655...</div><div class="cb" style="left:365px;top:111px;"></div><div class="cb" style="left:529px;top:111px;"></div><svg style="position:absolute;left:531px;top:113px" width="9" height="9" viewBox="0 0 9 9"><path d="M1 3.4 L3.4 6.9 L7.8 1.4" stroke="#0e9a0e" stroke-width="2.1" fill="none"/></svg><div style="position:absolute;left:624px;top:112px;width:164px;text-align:right;font-size:10.8px;line-height:1;color:#fff;">3</div><div style="position:absolute;left:789px;top:112px;width:369px;text-align:right;font-size:10.8px;line-height:1;color:#fff;">21</div><div style="position:absolute;left:0;top:126px;width:1159px;height:18px;background:#cadaf6;border-top:1px solid #b4b4bc;"></div><div style="position:absolute;left:103px;top:126px;width:1px;height:18px;background:#b4b4bc;"></div><div style="position:absolute;left:215px;top:126px;width:1px;height:18px;background:#b4b4bc;"></div><div style="position:absolute;left:296px;top:126px;width:1px;height:18px;background:#b4b4bc;"></div><div style="position:absolute;left:445px;top:126px;width:1px;height:18px;background:#b4b4bc;"></div><div style="position:absolute;left:624px;top:126px;width:1px;height:18px;background:#b4b4bc;"></div><div style="position:absolute;left:789px;top:126px;width:1px;height:18px;background:#b4b4bc;"></div><div style="position:absolute;left:1px;top:130px;font-size:10.8px;line-height:1;color:#000;white-space:nowrap;">Biele_ano</div><div style="position:absolute;left:104px;top:130px;font-size:10.8px;line-height:1;color:#000;white-space:nowrap;">Katinka_ano</div><div style="position:absolute;left:216px;top:130px;font-size:10.8px;line-height:1;color:#000;white-space:nowrap;">Kennung 2528...</div><div class="cb" style="left:365px;top:129px;"></div><div class="cb" style="left:529px;top:129px;"></div><div style="position:absolute;left:624px;top:130px;width:164px;text-align:right;font-size:10.8px;line-height:1;color:#000;">2</div><div style="position:absolute;left:789px;top:130px;width:369px;text-align:right;font-size:10.8px;line-height:1;color:#000;">15</div><div style="position:absolute;left:0;top:144px;width:1159px;height:18px;background:#e8e8f0;border-top:1px solid #b4b4bc;"></div><div style="position:absolute;left:103px;top:144px;width:1px;height:18px;background:#b4b4bc;"></div><div style="position:absolute;left:215px;top:144px;width:1px;height:18px;background:#b4b4bc;"></div><div style="position:absolute;left:296px;top:144px;width:1px;height:18px;background:#b4b4bc;"></div><div style="position:absolute;left:445px;top:144px;width:1px;height:18px;background:#b4b4bc;"></div><div style="position:absolute;left:624px;top:144px;width:1px;height:18px;background:#b4b4bc;"></div><div style="position:absolute;left:789px;top:144px;width:1px;height:18px;background:#b4b4bc;"></div><div style="position:absolute;left:1px;top:148px;font-size:10.8px;line-height:1;color:#000;white-space:nowrap;">Bjelic_ano</div><div style="position:absolute;left:104px;top:148px;font-size:10.8px;line-height:1;color:#000;white-space:nowrap;">Jeanine_ano</div><div style="position:absolute;left:216px;top:148px;font-size:10.8px;line-height:1;color:#000;white-space:nowrap;">Kennung 7793...</div><div class="cb" style="left:365px;top:147px;"></div><div class="cb" style="left:529px;top:147px;"></div><svg style="position:absolute;left:531px;top:149px" width="9" height="9" viewBox="0 0 9 9"><path d="M1 3.4 L3.4 6.9 L7.8 1.4" stroke="#0e9a0e" stroke-width="2.1" fill="none"/></svg><div style="position:absolute;left:624px;top:148px;width:164px;text-align:right;font-size:10.8px;line-height:1;color:#000;">2</div><div style="position:absolute;left:789px;top:148px;width:369px;text-align:right;font-size:10.8px;line-height:1;color:#000;">19</div><div style="position:absolute;left:0;top:162px;width:1159px;height:18px;background:#3f80fb;border-top:1px solid #b4b4bc;"></div><div style="position:absolute;left:103px;top:162px;width:1px;height:18px;background:#b4b4bc;"></div><div style="position:absolute;left:215px;top:162px;width:1px;height:18px;background:#b4b4bc;"></div><div style="position:absolute;left:296px;top:162px;width:1px;height:18px;background:#b4b4bc;"></div><div style="position:absolute;left:445px;top:162px;width:1px;height:18px;background:#b4b4bc;"></div><div style="position:absolute;left:624px;top:162px;width:1px;height:18px;background:#b4b4bc;"></div><div style="position:absolute;left:789px;top:162px;width:1px;height:18px;background:#b4b4bc;"></div><div style="position:absolute;left:1px;top:166px;font-size:10.8px;line-height:1;color:#fff;white-space:nowrap;">Böhler_ano</div><div style="position:absolute;left:104px;top:166px;font-size:10.8px;line-height:1;color:#fff;white-space:nowrap;">Birgit-Christine_ano</div><div style="position:absolute;left:216px;top:166px;font-size:10.8px;line-height:1;color:#fff;white-space:nowrap;">Kennung 8584...</div><div class="cb" style="left:365px;top:165px;"></div><div class="cb" style="left:529px;top:165px;"></div><svg style="position:absolute;left:531px;top:167px" width="9" height="9" viewBox="0 0 9 9"><path d="M1 3.4 L3.4 6.9 L7.8 1.4" stroke="#0e9a0e" stroke-width="2.1" fill="none"/></svg><div style="position:absolute;left:624px;top:166px;width:164px;text-align:right;font-size:10.8px;line-height:1;color:#fff;">2</div><div style="position:absolute;left:789px;top:166px;width:369px;text-align:right;font-size:10.8px;line-height:1;color:#fff;">50</div><div style="position:absolute;left:0;top:180px;width:1159px;height:18px;background:#3f80fb;border-top:1px solid #b4b4bc;"></div><div style="position:absolute;left:103px;top:180px;width:1px;height:18px;background:#b4b4bc;"></div><div style="position:absolute;left:215px;top:180px;width:1px;height:18px;background:#b4b4bc;"></div><div style="position:absolute;left:296px;top:180px;width:1px;height:18px;background:#b4b4bc;"></div><div style="position:absolute;left:445px;top:180px;width:1px;height:18px;background:#b4b4bc;"></div><div style="position:absolute;left:624px;top:180px;width:1px;height:18px;background:#b4b4bc;"></div><div style="position:absolute;left:789px;top:180px;width:1px;height:18px;background:#b4b4bc;"></div><div style="position:absolute;left:1px;top:184px;font-size:10.8px;line-height:1;color:#fff;white-space:nowrap;">Bräuning_ano</div><div style="position:absolute;left:104px;top:184px;font-size:10.8px;line-height:1;color:#fff;white-space:nowrap;">Hatem_ano</div><div style="position:absolute;left:216px;top:184px;font-size:10.8px;line-height:1;color:#fff;white-space:nowrap;">Kennung 8705...</div><div class="cb" style="left:365px;top:183px;"></div><div class="cb" style="left:529px;top:183px;"></div><div style="position:absolute;left:0;top:198px;width:1159px;height:18px;background:#3f80fb;border-top:1px solid #b4b4bc;"></div><div style="position:absolute;left:103px;top:198px;width:1px;height:18px;background:#b4b4bc;"></div><div style="position:absolute;left:215px;top:198px;width:1px;height:18px;background:#b4b4bc;"></div><div style="position:absolute;left:296px;top:198px;width:1px;height:18px;background:#b4b4bc;"></div><div style="position:absolute;left:445px;top:198px;width:1px;height:18px;background:#b4b4bc;"></div><div style="position:absolute;left:624px;top:198px;width:1px;height:18px;background:#b4b4bc;"></div><div style="position:absolute;left:789px;top:198px;width:1px;height:18px;background:#b4b4bc;"></div><div style="position:absolute;left:0;top:199px;width:103px;height:17px;background:#58acfb;border:1px solid #c8beb4;"></div><div style="position:absolute;left:1px;top:202px;font-size:10.8px;line-height:1;color:#fff;white-space:nowrap;">Brombosch_ano</div><div style="position:absolute;left:104px;top:202px;font-size:10.8px;line-height:1;color:#fff;white-space:nowrap;">Riccardo_ano</div><div style="position:absolute;left:216px;top:202px;font-size:10.8px;line-height:1;color:#fff;white-space:nowrap;">Kennung 5068...</div><div class="cb" style="left:365px;top:201px;"></div><div class="cb" style="left:529px;top:201px;"></div><svg style="position:absolute;left:531px;top:203px" width="9" height="9" viewBox="0 0 9 9"><path d="M1 3.4 L3.4 6.9 L7.8 1.4" stroke="#0e9a0e" stroke-width="2.1" fill="none"/></svg><div style="position:absolute;left:624px;top:202px;width:164px;text-align:right;font-size:10.8px;line-height:1;color:#fff;">1</div><div style="position:absolute;left:789px;top:202px;width:369px;text-align:right;font-size:10.8px;line-height:1;color:#fff;">40</div><div style="position:absolute;left:0;top:216px;width:1159px;height:18px;background:#e8e8f0;border-top:1px solid #b4b4bc;"></div><div style="position:absolute;left:103px;top:216px;width:1px;height:18px;background:#b4b4bc;"></div><div style="position:absolute;left:215px;top:216px;width:1px;height:18px;background:#b4b4bc;"></div><div style="position:absolute;left:296px;top:216px;width:1px;height:18px;background:#b4b4bc;"></div><div style="position:absolute;left:445px;top:216px;width:1px;height:18px;background:#b4b4bc;"></div><div style="position:absolute;left:624px;top:216px;width:1px;height:18px;background:#b4b4bc;"></div><div style="position:absolute;left:789px;top:216px;width:1px;height:18px;background:#b4b4bc;"></div><div style="position:absolute;left:1px;top:220px;font-size:10.8px;line-height:1;color:#000;white-space:nowrap;">Bünger_ano</div><div style="position:absolute;left:104px;top:220px;font-size:10.8px;line-height:1;color:#000;white-space:nowrap;">Jürgen-Roland_ano</div><div style="position:absolute;left:216px;top:220px;font-size:10.8px;line-height:1;color:#000;white-space:nowrap;">Kennung 7064...</div><div class="cb" style="left:365px;top:219px;"></div><div class="cb" style="left:529px;top:219px;"></div><svg style="position:absolute;left:531px;top:221px" width="9" height="9" viewBox="0 0 9 9"><path d="M1 3.4 L3.4 6.9 L7.8 1.4" stroke="#0e9a0e" stroke-width="2.1" fill="none"/></svg><div style="position:absolute;left:624px;top:220px;width:164px;text-align:right;font-size:10.8px;line-height:1;color:#000;">1</div><div style="position:absolute;left:789px;top:220px;width:369px;text-align:right;font-size:10.8px;line-height:1;color:#000;">50</div><div style="position:absolute;left:0;top:234px;width:1159px;height:18px;background:#cadaf6;border-top:1px solid #b4b4bc;"></div><div style="position:absolute;left:103px;top:234px;width:1px;height:18px;background:#b4b4bc;"></div><div style="position:absolute;left:215px;top:234px;width:1px;height:18px;background:#b4b4bc;"></div><div style="position:absolute;left:296px;top:234px;width:1px;height:18px;background:#b4b4bc;"></div><div style="position:absolute;left:445px;top:234px;width:1px;height:18px;background:#b4b4bc;"></div><div style="position:absolute;left:624px;top:234px;width:1px;height:18px;background:#b4b4bc;"></div><div style="position:absolute;left:789px;top:234px;width:1px;height:18px;background:#b4b4bc;"></div><div style="position:absolute;left:1px;top:238px;font-size:10.8px;line-height:1;color:#000;white-space:nowrap;">Burgemeister_ano</div><div style="position:absolute;left:104px;top:238px;font-size:10.8px;line-height:1;color:#000;white-space:nowrap;">Bertram_ano</div><div style="position:absolute;left:216px;top:238px;font-size:10.8px;line-height:1;color:#000;white-space:nowrap;">Kennung 9524...</div><div class="cb" style="left:365px;top:237px;"></div><div class="cb" style="left:529px;top:237px;"></div><svg style="position:absolute;left:531px;top:239px" width="9" height="9" viewBox="0 0 9 9"><path d="M1 3.4 L3.4 6.9 L7.8 1.4" stroke="#0e9a0e" stroke-width="2.1" fill="none"/></svg><div style="position:absolute;left:624px;top:238px;width:164px;text-align:right;font-size:10.8px;line-height:1;color:#000;">1</div><div style="position:absolute;left:789px;top:238px;width:369px;text-align:right;font-size:10.8px;line-height:1;color:#000;">34</div><div style="position:absolute;left:0;top:252px;width:1159px;height:18px;background:#e8e8f0;border-top:1px solid #b4b4bc;"></div><div style="position:absolute;left:103px;top:252px;width:1px;height:18px;background:#b4b4bc;"></div><div style="position:absolute;left:215px;top:252px;width:1px;height:18px;background:#b4b4bc;"></div><div style="position:absolute;left:296px;top:252px;width:1px;height:18px;background:#b4b4bc;"></div><div style="position:absolute;left:445px;top:252px;width:1px;height:18px;background:#b4b4bc;"></div><div style="position:absolute;left:624px;top:252px;width:1px;height:18px;background:#b4b4bc;"></div><div style="position:absolute;left:789px;top:252px;width:1px;height:18px;background:#b4b4bc;"></div><div style="position:absolute;left:1px;top:256px;font-size:10.8px;line-height:1;color:#000;white-space:nowrap;">Büsch_ano</div><div style="position:absolute;left:104px;top:256px;font-size:10.8px;line-height:1;color:#000;white-space:nowrap;">Marlene_ano</div><div style="position:absolute;left:216px;top:256px;font-size:10.8px;line-height:1;color:#000;white-space:nowrap;">Kennung 1773...</div><div class="cb" style="left:365px;top:255px;"></div><div class="cb" style="left:529px;top:255px;"></div><svg style="position:absolute;left:531px;top:257px" width="9" height="9" viewBox="0 0 9 9"><path d="M1 3.4 L3.4 6.9 L7.8 1.4" stroke="#0e9a0e" stroke-width="2.1" fill="none"/></svg><div style="position:absolute;left:624px;top:256px;width:164px;text-align:right;font-size:10.8px;line-height:1;color:#000;">2</div><div style="position:absolute;left:789px;top:256px;width:369px;text-align:right;font-size:10.8px;line-height:1;color:#000;">23</div><div style="position:absolute;left:0;top:270px;width:1159px;height:18px;background:#cadaf6;border-top:1px solid #b4b4bc;"></div><div style="position:absolute;left:103px;top:270px;width:1px;height:18px;background:#b4b4bc;"></div><div style="position:absolute;left:215px;top:270px;width:1px;height:18px;background:#b4b4bc;"></div><div style="position:absolute;left:296px;top:270px;width:1px;height:18px;background:#b4b4bc;"></div><div style="position:absolute;left:445px;top:270px;width:1px;height:18px;background:#b4b4bc;"></div><div style="position:absolute;left:624px;top:270px;width:1px;height:18px;background:#b4b4bc;"></div><div style="position:absolute;left:789px;top:270px;width:1px;height:18px;background:#b4b4bc;"></div><div style="position:absolute;left:1px;top:274px;font-size:10.8px;line-height:1;color:#000;white-space:nowrap;">Canitano_ano</div><div style="position:absolute;left:104px;top:274px;font-size:10.8px;line-height:1;color:#000;white-space:nowrap;">Till_ano</div><div style="position:absolute;left:216px;top:274px;font-size:10.8px;line-height:1;color:#000;white-space:nowrap;">Kennung 7476...</div><div class="cb" style="left:365px;top:273px;"></div><div class="cb" style="left:529px;top:273px;"></div><svg style="position:absolute;left:531px;top:275px" width="9" height="9" viewBox="0 0 9 9"><path d="M1 3.4 L3.4 6.9 L7.8 1.4" stroke="#0e9a0e" stroke-width="2.1" fill="none"/></svg><div style="position:absolute;left:624px;top:274px;width:164px;text-align:right;font-size:10.8px;line-height:1;color:#000;">5</div><div style="position:absolute;left:789px;top:274px;width:369px;text-align:right;font-size:10.8px;line-height:1;color:#000;">24</div><div style="position:absolute;left:0;top:288px;width:1159px;height:18px;background:#e8e8f0;border-top:1px solid #b4b4bc;"></div><div style="position:absolute;left:103px;top:288px;width:1px;height:18px;background:#b4b4bc;"></div><div style="position:absolute;left:215px;top:288px;width:1px;height:18px;background:#b4b4bc;"></div><div style="position:absolute;left:296px;top:288px;width:1px;height:18px;background:#b4b4bc;"></div><div style="position:absolute;left:445px;top:288px;width:1px;height:18px;background:#b4b4bc;"></div><div style="position:absolute;left:624px;top:288px;width:1px;height:18px;background:#b4b4bc;"></div><div style="position:absolute;left:789px;top:288px;width:1px;height:18px;background:#b4b4bc;"></div><div style="position:absolute;left:1px;top:292px;font-size:10.8px;line-height:1;color:#000;white-space:nowrap;">Cetin_ano</div><div style="position:absolute;left:104px;top:292px;font-size:10.8px;line-height:1;color:#000;white-space:nowrap;">Michal_ano</div><div style="position:absolute;left:216px;top:292px;font-size:10.8px;line-height:1;color:#000;white-space:nowrap;">Kennung 3689...</div><div class="cb" style="left:365px;top:291px;"></div><div class="cb" style="left:529px;top:291px;"></div><svg style="position:absolute;left:531px;top:293px" width="9" height="9" viewBox="0 0 9 9"><path d="M1 3.4 L3.4 6.9 L7.8 1.4" stroke="#0e9a0e" stroke-width="2.1" fill="none"/></svg><div style="position:absolute;left:624px;top:292px;width:164px;text-align:right;font-size:10.8px;line-height:1;color:#000;">4</div><div style="position:absolute;left:789px;top:292px;width:369px;text-align:right;font-size:10.8px;line-height:1;color:#000;">46</div><div style="position:absolute;left:0;top:306px;width:1159px;height:18px;background:#cadaf6;border-top:1px solid #b4b4bc;"></div><div style="position:absolute;left:103px;top:306px;width:1px;height:18px;background:#b4b4bc;"></div><div style="position:absolute;left:215px;top:306px;width:1px;height:18px;background:#b4b4bc;"></div><div style="position:absolute;left:296px;top:306px;width:1px;height:18px;background:#b4b4bc;"></div><div style="position:absolute;left:445px;top:306px;width:1px;height:18px;background:#b4b4bc;"></div><div style="position:absolute;left:624px;top:306px;width:1px;height:18px;background:#b4b4bc;"></div><div style="position:absolute;left:789px;top:306px;width:1px;height:18px;background:#b4b4bc;"></div><div style="position:absolute;left:1px;top:310px;font-size:10.8px;line-height:1;color:#000;white-space:nowrap;">Chucholowski_ano</div><div style="position:absolute;left:104px;top:310px;font-size:10.8px;line-height:1;color:#000;white-space:nowrap;">Siyu_ano</div><div style="position:absolute;left:216px;top:310px;font-size:10.8px;line-height:1;color:#000;white-space:nowrap;">Kennung 3016...</div><div class="cb" style="left:365px;top:309px;"></div><div class="cb" style="left:529px;top:309px;"></div><svg style="position:absolute;left:531px;top:311px" width="9" height="9" viewBox="0 0 9 9"><path d="M1 3.4 L3.4 6.9 L7.8 1.4" stroke="#0e9a0e" stroke-width="2.1" fill="none"/></svg><div style="position:absolute;left:624px;top:310px;width:164px;text-align:right;font-size:10.8px;line-height:1;color:#000;">1</div><div style="position:absolute;left:789px;top:310px;width:369px;text-align:right;font-size:10.8px;line-height:1;color:#000;">45</div><div style="position:absolute;left:0;top:324px;width:1159px;height:18px;background:#e8e8f0;border-top:1px solid #b4b4bc;"></div><div style="position:absolute;left:103px;top:324px;width:1px;height:18px;background:#b4b4bc;"></div><div style="position:absolute;left:215px;top:324px;width:1px;height:18px;background:#b4b4bc;"></div><div style="position:absolute;left:296px;top:324px;width:1px;height:18px;background:#b4b4bc;"></div><div style="position:absolute;left:445px;top:324px;width:1px;height:18px;background:#b4b4bc;"></div><div style="position:absolute;left:624px;top:324px;width:1px;height:18px;background:#b4b4bc;"></div><div style="position:absolute;left:789px;top:324px;width:1px;height:18px;background:#b4b4bc;"></div><div style="position:absolute;left:1px;top:328px;font-size:10.8px;line-height:1;color:#000;white-space:nowrap;">Coclici_ano</div><div style="position:absolute;left:104px;top:328px;font-size:10.8px;line-height:1;color:#000;white-space:nowrap;">Kamen_ano</div><div style="position:absolute;left:216px;top:328px;font-size:10.8px;line-height:1;color:#000;white-space:nowrap;">Kennung 3655...</div><div class="cb" style="left:365px;top:327px;"></div><div class="cb" style="left:529px;top:327px;"></div><svg style="position:absolute;left:531px;top:329px" width="9" height="9" viewBox="0 0 9 9"><path d="M1 3.4 L3.4 6.9 L7.8 1.4" stroke="#0e9a0e" stroke-width="2.1" fill="none"/></svg><div style="position:absolute;left:624px;top:328px;width:164px;text-align:right;font-size:10.8px;line-height:1;color:#000;">2</div><div style="position:absolute;left:789px;top:328px;width:369px;text-align:right;font-size:10.8px;line-height:1;color:#000;">50</div><div style="position:absolute;left:0;top:342px;width:1159px;height:18px;background:#cadaf6;border-top:1px solid #b4b4bc;"></div><div style="position:absolute;left:103px;top:342px;width:1px;height:18px;background:#b4b4bc;"></div><div style="position:absolute;left:215px;top:342px;width:1px;height:18px;background:#b4b4bc;"></div><div style="position:absolute;left:296px;top:342px;width:1px;height:18px;background:#b4b4bc;"></div><div style="position:absolute;left:445px;top:342px;width:1px;height:18px;background:#b4b4bc;"></div><div style="position:absolute;left:624px;top:342px;width:1px;height:18px;background:#b4b4bc;"></div><div style="position:absolute;left:789px;top:342px;width:1px;height:18px;background:#b4b4bc;"></div><div style="position:absolute;left:1px;top:346px;font-size:10.8px;line-height:1;color:#000;white-space:nowrap;">Dahlke_ano</div><div style="position:absolute;left:104px;top:346px;font-size:10.8px;line-height:1;color:#000;white-space:nowrap;">Denise_ano</div><div style="position:absolute;left:216px;top:346px;font-size:10.8px;line-height:1;color:#000;white-space:nowrap;">Kennung 4431...</div><div class="cb" style="left:365px;top:345px;"></div><div class="cb" style="left:529px;top:345px;"></div><div style="position:absolute;left:624px;top:346px;width:164px;text-align:right;font-size:10.8px;line-height:1;color:#000;">1</div><div style="position:absolute;left:789px;top:346px;width:369px;text-align:right;font-size:10.8px;line-height:1;color:#000;">23</div><div style="position:absolute;left:0;top:360px;width:1159px;height:18px;background:#e8e8f0;border-top:1px solid #b4b4bc;"></div><div style="position:absolute;left:103px;top:360px;width:1px;height:18px;background:#b4b4bc;"></div><div style="position:absolute;left:215px;top:360px;width:1px;height:18px;background:#b4b4bc;"></div><div style="position:absolute;left:296px;top:360px;width:1px;height:18px;background:#b4b4bc;"></div><div style="position:absolute;left:445px;top:360px;width:1px;height:18px;background:#b4b4bc;"></div><div style="position:absolute;left:624px;top:360px;width:1px;height:18px;background:#b4b4bc;"></div><div style="position:absolute;left:789px;top:360px;width:1px;height:18px;background:#b4b4bc;"></div><div style="position:absolute;left:1px;top:364px;font-size:10.8px;line-height:1;color:#000;white-space:nowrap;">Deflorio_ano</div><div style="position:absolute;left:104px;top:364px;font-size:10.8px;line-height:1;color:#000;white-space:nowrap;">Rolf-Werner_ano</div><div style="position:absolute;left:216px;top:364px;font-size:10.8px;line-height:1;color:#000;white-space:nowrap;">Kennung 6006...</div><div class="cb" style="left:365px;top:363px;"></div><div class="cb" style="left:529px;top:363px;"></div><div style="position:absolute;left:0;top:378px;width:1159px;height:18px;background:#cadaf6;border-top:1px solid #b4b4bc;"></div><div style="position:absolute;left:103px;top:378px;width:1px;height:18px;background:#b4b4bc;"></div><div style="position:absolute;left:215px;top:378px;width:1px;height:18px;background:#b4b4bc;"></div><div style="position:absolute;left:296px;top:378px;width:1px;height:18px;background:#b4b4bc;"></div><div style="position:absolute;left:445px;top:378px;width:1px;height:18px;background:#b4b4bc;"></div><div style="position:absolute;left:624px;top:378px;width:1px;height:18px;background:#b4b4bc;"></div><div style="position:absolute;left:789px;top:378px;width:1px;height:18px;background:#b4b4bc;"></div><div style="position:absolute;left:1px;top:382px;font-size:10.8px;line-height:1;color:#000;white-space:nowrap;">Ehrenfried_ano</div><div style="position:absolute;left:104px;top:382px;font-size:10.8px;line-height:1;color:#000;white-space:nowrap;">Donate_ano</div><div style="position:absolute;left:216px;top:382px;font-size:10.8px;line-height:1;color:#000;white-space:nowrap;">Kennung 7350...</div><div class="cb" style="left:365px;top:381px;"></div><div class="cb" style="left:529px;top:381px;"></div><svg style="position:absolute;left:531px;top:383px" width="9" height="9" viewBox="0 0 9 9"><path d="M1 3.4 L3.4 6.9 L7.8 1.4" stroke="#0e9a0e" stroke-width="2.1" fill="none"/></svg><div style="position:absolute;left:624px;top:382px;width:164px;text-align:right;font-size:10.8px;line-height:1;color:#000;">1</div><div style="position:absolute;left:789px;top:382px;width:369px;text-align:right;font-size:10.8px;line-height:1;color:#000;">37</div><div style="position:absolute;left:0;top:396px;width:1159px;height:18px;background:#e8e8f0;border-top:1px solid #b4b4bc;"></div><div style="position:absolute;left:103px;top:396px;width:1px;height:18px;background:#b4b4bc;"></div><div style="position:absolute;left:215px;top:396px;width:1px;height:18px;background:#b4b4bc;"></div><div style="position:absolute;left:296px;top:396px;width:1px;height:18px;background:#b4b4bc;"></div><div style="position:absolute;left:445px;top:396px;width:1px;height:18px;background:#b4b4bc;"></div><div style="position:absolute;left:624px;top:396px;width:1px;height:18px;background:#b4b4bc;"></div><div style="position:absolute;left:789px;top:396px;width:1px;height:18px;background:#b4b4bc;"></div><div style="position:absolute;left:1px;top:400px;font-size:10.8px;line-height:1;color:#000;white-space:nowrap;">Elben_ano</div><div style="position:absolute;left:104px;top:400px;font-size:10.8px;line-height:1;color:#000;white-space:nowrap;">Wolff_ano</div><div style="position:absolute;left:216px;top:400px;font-size:10.8px;line-height:1;color:#000;white-space:nowrap;">Kennung 8686...</div><div class="cb" style="left:365px;top:399px;"></div><div class="cb" style="left:529px;top:399px;"></div><div style="position:absolute;left:0;top:414px;width:1159px;height:18px;background:#cadaf6;border-top:1px solid #b4b4bc;"></div><div style="position:absolute;left:103px;top:414px;width:1px;height:18px;background:#b4b4bc;"></div><div style="position:absolute;left:215px;top:414px;width:1px;height:18px;background:#b4b4bc;"></div><div style="position:absolute;left:296px;top:414px;width:1px;height:18px;background:#b4b4bc;"></div><div style="position:absolute;left:445px;top:414px;width:1px;height:18px;background:#b4b4bc;"></div><div style="position:absolute;left:624px;top:414px;width:1px;height:18px;background:#b4b4bc;"></div><div style="position:absolute;left:789px;top:414px;width:1px;height:18px;background:#b4b4bc;"></div><div style="position:absolute;left:1px;top:418px;font-size:10.8px;line-height:1;color:#000;white-space:nowrap;">Elsmann_ano</div><div style="position:absolute;left:104px;top:418px;font-size:10.8px;line-height:1;color:#000;white-space:nowrap;">Hakan_ano</div><div style="position:absolute;left:216px;top:418px;font-size:10.8px;line-height:1;color:#000;white-space:nowrap;">Kennung 4373...</div><div class="cb" style="left:365px;top:417px;"></div><div class="cb" style="left:529px;top:417px;"></div><div style="position:absolute;left:0;top:432px;width:1159px;height:18px;background:#e8e8f0;border-top:1px solid #b4b4bc;"></div><div style="position:absolute;left:103px;top:432px;width:1px;height:18px;background:#b4b4bc;"></div><div style="position:absolute;left:215px;top:432px;width:1px;height:18px;background:#b4b4bc;"></div><div style="position:absolute;left:296px;top:432px;width:1px;height:18px;background:#b4b4bc;"></div><div style="position:absolute;left:445px;top:432px;width:1px;height:18px;background:#b4b4bc;"></div><div style="position:absolute;left:624px;top:432px;width:1px;height:18px;background:#b4b4bc;"></div><div style="position:absolute;left:789px;top:432px;width:1px;height:18px;background:#b4b4bc;"></div><div style="position:absolute;left:1px;top:436px;font-size:10.8px;line-height:1;color:#000;white-space:nowrap;">Erhardt_ano</div><div style="position:absolute;left:104px;top:436px;font-size:10.8px;line-height:1;color:#000;white-space:nowrap;">Lene_ano</div><div style="position:absolute;left:216px;top:436px;font-size:10.8px;line-height:1;color:#000;white-space:nowrap;">Kennung 2415...</div><div class="cb" style="left:365px;top:435px;"></div><div class="cb" style="left:529px;top:435px;"></div><svg style="position:absolute;left:531px;top:437px" width="9" height="9" viewBox="0 0 9 9"><path d="M1 3.4 L3.4 6.9 L7.8 1.4" stroke="#0e9a0e" stroke-width="2.1" fill="none"/></svg><div style="position:absolute;left:624px;top:436px;width:164px;text-align:right;font-size:10.8px;line-height:1;color:#000;">3</div><div style="position:absolute;left:789px;top:436px;width:369px;text-align:right;font-size:10.8px;line-height:1;color:#000;">10</div><div style="position:absolute;left:0;top:450px;width:1159px;height:18px;background:#cadaf6;border-top:1px solid #b4b4bc;"></div><div style="position:absolute;left:103px;top:450px;width:1px;height:18px;background:#b4b4bc;"></div><div style="position:absolute;left:215px;top:450px;width:1px;height:18px;background:#b4b4bc;"></div><div style="position:absolute;left:296px;top:450px;width:1px;height:18px;background:#b4b4bc;"></div><div style="position:absolute;left:445px;top:450px;width:1px;height:18px;background:#b4b4bc;"></div><div style="position:absolute;left:624px;top:450px;width:1px;height:18px;background:#b4b4bc;"></div><div style="position:absolute;left:789px;top:450px;width:1px;height:18px;background:#b4b4bc;"></div><div style="position:absolute;left:1px;top:454px;font-size:10.8px;line-height:1;color:#000;white-space:nowrap;">Erlenwein_ano</div><div style="position:absolute;left:104px;top:454px;font-size:10.8px;line-height:1;color:#000;white-space:nowrap;">Ingmar_ano</div><div style="position:absolute;left:216px;top:454px;font-size:10.8px;line-height:1;color:#000;white-space:nowrap;">Kennung 4104...</div><div class="cb" style="left:365px;top:453px;"></div><div class="cb" style="left:529px;top:453px;"></div><svg style="position:absolute;left:531px;top:455px" width="9" height="9" viewBox="0 0 9 9"><path d="M1 3.4 L3.4 6.9 L7.8 1.4" stroke="#0e9a0e" stroke-width="2.1" fill="none"/></svg><div style="position:absolute;left:624px;top:454px;width:164px;text-align:right;font-size:10.8px;line-height:1;color:#000;">1</div><div style="position:absolute;left:789px;top:454px;width:369px;text-align:right;font-size:10.8px;line-height:1;color:#000;">50</div><div style="position:absolute;left:0;top:468px;width:1159px;height:18px;background:#e8e8f0;border-top:1px solid #b4b4bc;"></div><div style="position:absolute;left:103px;top:468px;width:1px;height:18px;background:#b4b4bc;"></div><div style="position:absolute;left:215px;top:468px;width:1px;height:18px;background:#b4b4bc;"></div><div style="position:absolute;left:296px;top:468px;width:1px;height:18px;background:#b4b4bc;"></div><div style="position:absolute;left:445px;top:468px;width:1px;height:18px;background:#b4b4bc;"></div><div style="position:absolute;left:624px;top:468px;width:1px;height:18px;background:#b4b4bc;"></div><div style="position:absolute;left:789px;top:468px;width:1px;height:18px;background:#b4b4bc;"></div><div style="position:absolute;left:1px;top:472px;font-size:10.8px;line-height:1;color:#000;white-space:nowrap;">Eulberg_ano</div><div style="position:absolute;left:104px;top:472px;font-size:10.8px;line-height:1;color:#000;white-space:nowrap;">Giselher_ano</div><div style="position:absolute;left:216px;top:472px;font-size:10.8px;line-height:1;color:#000;white-space:nowrap;">Kennung 5517...</div><div class="cb" style="left:365px;top:471px;"></div><div class="cb" style="left:529px;top:471px;"></div><svg style="position:absolute;left:531px;top:473px" width="9" height="9" viewBox="0 0 9 9"><path d="M1 3.4 L3.4 6.9 L7.8 1.4" stroke="#0e9a0e" stroke-width="2.1" fill="none"/></svg><div style="position:absolute;left:624px;top:472px;width:164px;text-align:right;font-size:10.8px;line-height:1;color:#000;">2</div><div style="position:absolute;left:789px;top:472px;width:369px;text-align:right;font-size:10.8px;line-height:1;color:#000;">30</div><div style="position:absolute;left:0;top:486px;width:1159px;height:18px;background:#cadaf6;border-top:1px solid #b4b4bc;"></div><div style="position:absolute;left:103px;top:486px;width:1px;height:18px;background:#b4b4bc;"></div><div style="position:absolute;left:215px;top:486px;width:1px;height:18px;background:#b4b4bc;"></div><div style="position:absolute;left:296px;top:486px;width:1px;height:18px;background:#b4b4bc;"></div><div style="position:absolute;left:445px;top:486px;width:1px;height:18px;background:#b4b4bc;"></div><div style="position:absolute;left:624px;top:486px;width:1px;height:18px;background:#b4b4bc;"></div><div style="position:absolute;left:789px;top:486px;width:1px;height:18px;background:#b4b4bc;"></div><div style="position:absolute;left:1px;top:490px;font-size:10.8px;line-height:1;color:#000;white-space:nowrap;">Feierabend_ano</div><div style="position:absolute;left:104px;top:490px;font-size:10.8px;line-height:1;color:#000;white-space:nowrap;">Maria-Isabel_ano</div><div style="position:absolute;left:216px;top:490px;font-size:10.8px;line-height:1;color:#000;white-space:nowrap;">Kennung 4751...</div><div class="cb" style="left:365px;top:489px;"></div><div class="cb" style="left:529px;top:489px;"></div><svg style="position:absolute;left:531px;top:491px" width="9" height="9" viewBox="0 0 9 9"><path d="M1 3.4 L3.4 6.9 L7.8 1.4" stroke="#0e9a0e" stroke-width="2.1" fill="none"/></svg><div style="position:absolute;left:624px;top:490px;width:164px;text-align:right;font-size:10.8px;line-height:1;color:#000;">4</div><div style="position:absolute;left:789px;top:490px;width:369px;text-align:right;font-size:10.8px;line-height:1;color:#000;">21</div><div style="position:absolute;left:0;top:504px;width:1159px;height:18px;background:#e8e8f0;border-top:1px solid #b4b4bc;"></div><div style="position:absolute;left:103px;top:504px;width:1px;height:18px;background:#b4b4bc;"></div><div style="position:absolute;left:215px;top:504px;width:1px;height:18px;background:#b4b4bc;"></div><div style="position:absolute;left:296px;top:504px;width:1px;height:18px;background:#b4b4bc;"></div><div style="position:absolute;left:445px;top:504px;width:1px;height:18px;background:#b4b4bc;"></div><div style="position:absolute;left:624px;top:504px;width:1px;height:18px;background:#b4b4bc;"></div><div style="position:absolute;left:789px;top:504px;width:1px;height:18px;background:#b4b4bc;"></div><div style="position:absolute;left:1px;top:508px;font-size:10.8px;line-height:1;color:#000;white-space:nowrap;">Filo_ano</div><div style="position:absolute;left:104px;top:508px;font-size:10.8px;line-height:1;color:#000;white-space:nowrap;">Richard_ano</div><div style="position:absolute;left:216px;top:508px;font-size:10.8px;line-height:1;color:#000;white-space:nowrap;">Kennung 9902...</div><div class="cb" style="left:365px;top:507px;"></div><div class="cb" style="left:529px;top:507px;"></div><svg style="position:absolute;left:531px;top:509px" width="9" height="9" viewBox="0 0 9 9"><path d="M1 3.4 L3.4 6.9 L7.8 1.4" stroke="#0e9a0e" stroke-width="2.1" fill="none"/></svg><div style="position:absolute;left:624px;top:508px;width:164px;text-align:right;font-size:10.8px;line-height:1;color:#000;">3</div><div style="position:absolute;left:789px;top:508px;width:369px;text-align:right;font-size:10.8px;line-height:1;color:#000;">6</div><div style="position:absolute;left:0;top:522px;width:1159px;height:18px;background:#cadaf6;border-top:1px solid #b4b4bc;"></div><div style="position:absolute;left:103px;top:522px;width:1px;height:18px;background:#b4b4bc;"></div><div style="position:absolute;left:215px;top:522px;width:1px;height:18px;background:#b4b4bc;"></div><div style="position:absolute;left:296px;top:522px;width:1px;height:18px;background:#b4b4bc;"></div><div style="position:absolute;left:445px;top:522px;width:1px;height:18px;background:#b4b4bc;"></div><div style="position:absolute;left:624px;top:522px;width:1px;height:18px;background:#b4b4bc;"></div><div style="position:absolute;left:789px;top:522px;width:1px;height:18px;background:#b4b4bc;"></div><div style="position:absolute;left:1px;top:526px;font-size:10.8px;line-height:1;color:#000;white-space:nowrap;">Förtsch_ano</div><div style="position:absolute;left:104px;top:526px;font-size:10.8px;line-height:1;color:#000;white-space:nowrap;">Vivian_ano</div><div style="position:absolute;left:216px;top:526px;font-size:10.8px;line-height:1;color:#000;white-space:nowrap;">Kennung 2757...</div><div class="cb" style="left:365px;top:525px;"></div><div class="cb" style="left:529px;top:525px;"></div><div style="position:absolute;left:624px;top:526px;width:164px;text-align:right;font-size:10.8px;line-height:1;color:#000;">1</div><div style="position:absolute;left:789px;top:526px;width:369px;text-align:right;font-size:10.8px;line-height:1;color:#000;">25</div><div style="position:absolute;left:0;top:540px;width:1159px;height:18px;background:#e8e8f0;border-top:1px solid #b4b4bc;"></div><div style="position:absolute;left:103px;top:540px;width:1px;height:18px;background:#b4b4bc;"></div><div style="position:absolute;left:215px;top:540px;width:1px;height:18px;background:#b4b4bc;"></div><div style="position:absolute;left:296px;top:540px;width:1px;height:18px;background:#b4b4bc;"></div><div style="position:absolute;left:445px;top:540px;width:1px;height:18px;background:#b4b4bc;"></div><div style="position:absolute;left:624px;top:540px;width:1px;height:18px;background:#b4b4bc;"></div><div style="position:absolute;left:789px;top:540px;width:1px;height:18px;background:#b4b4bc;"></div><div style="position:absolute;left:1px;top:544px;font-size:10.8px;line-height:1;color:#000;white-space:nowrap;">Gansmann_ano</div><div style="position:absolute;left:104px;top:544px;font-size:10.8px;line-height:1;color:#000;white-space:nowrap;">Uve_ano</div><div style="position:absolute;left:216px;top:544px;font-size:10.8px;line-height:1;color:#000;white-space:nowrap;">Kennung 4614...</div><div class="cb" style="left:365px;top:543px;"></div><div class="cb" style="left:529px;top:543px;"></div><svg style="position:absolute;left:531px;top:545px" width="9" height="9" viewBox="0 0 9 9"><path d="M1 3.4 L3.4 6.9 L7.8 1.4" stroke="#0e9a0e" stroke-width="2.1" fill="none"/></svg><div style="position:absolute;left:624px;top:544px;width:164px;text-align:right;font-size:10.8px;line-height:1;color:#000;">4</div><div style="position:absolute;left:789px;top:544px;width:369px;text-align:right;font-size:10.8px;line-height:1;color:#000;">30</div><div style="position:absolute;left:0;top:558px;width:1159px;height:18px;background:#cadaf6;border-top:1px solid #b4b4bc;"></div><div style="position:absolute;left:103px;top:558px;width:1px;height:18px;background:#b4b4bc;"></div><div style="position:absolute;left:215px;top:558px;width:1px;height:18px;background:#b4b4bc;"></div><div style="position:absolute;left:296px;top:558px;width:1px;height:18px;background:#b4b4bc;"></div><div style="position:absolute;left:445px;top:558px;width:1px;height:18px;background:#b4b4bc;"></div><div style="position:absolute;left:624px;top:558px;width:1px;height:18px;background:#b4b4bc;"></div><div style="position:absolute;left:789px;top:558px;width:1px;height:18px;background:#b4b4bc;"></div><div style="position:absolute;left:1px;top:562px;font-size:10.8px;line-height:1;color:#000;white-space:nowrap;">Gengel_ano</div><div style="position:absolute;left:104px;top:562px;font-size:10.8px;line-height:1;color:#000;white-space:nowrap;">Rena_ano</div><div style="position:absolute;left:216px;top:562px;font-size:10.8px;line-height:1;color:#000;white-space:nowrap;">Kennung 2246...</div><div class="cb" style="left:365px;top:561px;"></div><div class="cb" style="left:529px;top:561px;"></div><svg style="position:absolute;left:531px;top:563px" width="9" height="9" viewBox="0 0 9 9"><path d="M1 3.4 L3.4 6.9 L7.8 1.4" stroke="#0e9a0e" stroke-width="2.1" fill="none"/></svg><div style="position:absolute;left:624px;top:562px;width:164px;text-align:right;font-size:10.8px;line-height:1;color:#000;">1</div><div style="position:absolute;left:789px;top:562px;width:369px;text-align:right;font-size:10.8px;line-height:1;color:#000;">23</div><div style="position:absolute;left:0;top:576px;width:1159px;height:18px;background:#e8e8f0;border-top:1px solid #b4b4bc;"></div><div style="position:absolute;left:103px;top:576px;width:1px;height:18px;background:#b4b4bc;"></div><div style="position:absolute;left:215px;top:576px;width:1px;height:18px;background:#b4b4bc;"></div><div style="position:absolute;left:296px;top:576px;width:1px;height:18px;background:#b4b4bc;"></div><div style="position:absolute;left:445px;top:576px;width:1px;height:18px;background:#b4b4bc;"></div><div style="position:absolute;left:624px;top:576px;width:1px;height:18px;background:#b4b4bc;"></div><div style="position:absolute;left:789px;top:576px;width:1px;height:18px;background:#b4b4bc;"></div><div style="position:absolute;left:1px;top:580px;font-size:10.8px;line-height:1;color:#000;white-space:nowrap;">Georgi_ano</div><div style="position:absolute;left:104px;top:580px;font-size:10.8px;line-height:1;color:#000;white-space:nowrap;">Sidney_ano</div><div style="position:absolute;left:216px;top:580px;font-size:10.8px;line-height:1;color:#000;white-space:nowrap;">Kennung 9281...</div><div class="cb" style="left:365px;top:579px;"></div><div class="cb" style="left:529px;top:579px;"></div><svg style="position:absolute;left:531px;top:581px" width="9" height="9" viewBox="0 0 9 9"><path d="M1 3.4 L3.4 6.9 L7.8 1.4" stroke="#0e9a0e" stroke-width="2.1" fill="none"/></svg><div style="position:absolute;left:624px;top:580px;width:164px;text-align:right;font-size:10.8px;line-height:1;color:#000;">1</div><div style="position:absolute;left:789px;top:580px;width:369px;text-align:right;font-size:10.8px;line-height:1;color:#000;">46</div><div style="position:absolute;left:0;top:594px;width:1159px;height:18px;background:#cadaf6;border-top:1px solid #b4b4bc;"></div><div style="position:absolute;left:103px;top:594px;width:1px;height:18px;background:#b4b4bc;"></div><div style="position:absolute;left:215px;top:594px;width:1px;height:18px;background:#b4b4bc;"></div><div style="position:absolute;left:296px;top:594px;width:1px;height:18px;background:#b4b4bc;"></div><div style="position:absolute;left:445px;top:594px;width:1px;height:18px;background:#b4b4bc;"></div><div style="position:absolute;left:624px;top:594px;width:1px;height:18px;background:#b4b4bc;"></div><div style="position:absolute;left:789px;top:594px;width:1px;height:18px;background:#b4b4bc;"></div><div style="position:absolute;left:1px;top:598px;font-size:10.8px;line-height:1;color:#000;white-space:nowrap;">X_ano</div><div style="position:absolute;left:104px;top:598px;font-size:10.8px;line-height:1;color:#000;white-space:nowrap;">Y_ano</div><div style="position:absolute;left:216px;top:598px;font-size:10.8px;line-height:1;color:#000;white-space:nowrap;">Kennung 0000...</div><div class="cb" style="left:365px;top:597px;"></div><div class="cb" style="left:529px;top:597px;"></div><svg style="position:absolute;left:531px;top:599px" width="9" height="9" viewBox="0 0 9 9"><path d="M1 3.4 L3.4 6.9 L7.8 1.4" stroke="#0e9a0e" stroke-width="2.1" fill="none"/></svg><div style="position:absolute;left:624px;top:598px;width:164px;text-align:right;font-size:10.8px;line-height:1;color:#000;">1</div><div style="position:absolute;left:789px;top:598px;width:369px;text-align:right;font-size:10.8px;line-height:1;color:#000;">1</div></div><div style="position:absolute;left:1168px;top:311px;width:17px;height:597px;background:#fff;"></div><div style="position:absolute;left:1186px;top:311px;width:1px;height:597px;background:#ffffff;"></div><div style="position:absolute;left:1168px;top:310px;width:1px;height:598px;background:#a0a0a8;"></div><div style="position:absolute;left:1170px;top:311px;width:16px;height:17px;border:1px solid #c8d4e8;border-radius:2px;background:linear-gradient(#f4f7ff,#b8c6e2);"></div><svg style="position:absolute;left:1173px;top:315px" width="10" height="7" viewBox="0 0 10 7"><path d="M1 6 L5 2 L9 6" stroke="#4a6080" stroke-width="2" fill="none"/></svg><div style="position:absolute;left:1170px;top:329px;width:16px;height:159px;border:1px solid #c8d4e8;border-radius:2px;background:linear-gradient(90deg,#dfe7fa,#b4c4e6);"></div><svg style="position:absolute;left:1173px;top:404px" width="10" height="8" viewBox="0 0 10 8"><path d="M1 1H9M1 3.5H9M1 6H9" stroke="#8898b8" stroke-width="0.8"/></svg><div style="position:absolute;left:1170px;top:891px;width:16px;height:17px;border:1px solid #c8d4e8;border-radius:2px;background:linear-gradient(#f4f7ff,#b8c6e2);"></div><svg style="position:absolute;left:1173px;top:896px" width="10" height="7" viewBox="0 0 10 7"><path d="M1 1 L5 5 L9 1" stroke="#4a6080" stroke-width="2" fill="none"/></svg><div style="position:absolute;left:1194px;top:136px;width:1px;height:779px;background:#ffffff;"></div><div style="position:absolute;left:9px;top:908px;width:1159px;height:1px;background:#ffffff;"></div><div style="position:absolute;left:1195px;top:136px;width:311px;height:780px;background:#f2f2fe;"></div><div style="position:absolute;left:1200px;top:136px;width:1px;height:779px;background:#5c5c5c;"></div><div style="position:absolute;left:1200px;top:136px;width:302px;height:1px;background:#5c5c5c;"></div><div style="position:absolute;left:1207px;top:145px;width:9px;height:1px;background:#a0a0a8;"></div><div style="position:absolute;left:1218px;top:140px;font-size:11.2px;line-height:1;color:#000;white-space:nowrap;">Navigator</div><div style="position:absolute;left:1269px;top:145px;width:228px;height:1px;background:#a0a0a8;"></div><div style="position:absolute;left:1207px;top:161px;width:288px;height:1px;background:#a0a0a8;"></div><div style="position:absolute;left:1207px;top:161px;width:1px;height:706px;background:#a0a0a8;"></div><div style="position:absolute;left:1208px;top:162px;width:271px;height:19px;background:linear-gradient(#f6f6fd,#eeeef8);"></div><div style="position:absolute;left:1208px;top:180px;width:271px;height:1px;background:#d4d4dc;"></div><div style="position:absolute;left:1208px;top:181px;width:271px;height:1px;background:#bcbcc4;"></div><div style="position:absolute;left:1208px;top:167px;font-size:10.6px;line-height:1;color:#000;white-space:nowrap;">Schul-/Dst.Nr.</div><div style="position:absolute;left:1276px;top:164px;width:1px;height:16px;background:#d0d0d8;"></div><div style="position:absolute;left:1278px;top:167px;font-size:10.6px;line-height:1;color:#000;white-space:nowrap;">Zweig</div><svg style="position:absolute;left:1354px;top:170px" width="10" height="6" viewBox="0 0 10 6"><path d="M0.5 0.5 L5 5.5 L9.5 0.5Z" fill="#3a4a60"/></svg><div style="position:absolute;left:1366px;top:164px;width:1px;height:16px;background:#d0d0d8;"></div><div style="position:absolute;left:1368px;top:167px;font-size:10.6px;line-height:1;color:#000;white-space:nowrap;">Schulbezeichnung</div><div style="position:absolute;left:1479px;top:162px;width:16px;height:20px;border:1px solid #2b4a80;border-radius:3px;background:linear-gradient(#fff,#e0e2ee);"></div><svg style="position:absolute;left:1481px;top:165px" width="11" height="13" viewBox="0 0 11 13"><path d="M0.5 0.5 H9.5 V5 M0.5 0.5 V10 H4 M0.5 3.5 H9.5 M4.5 0.5 V6" stroke="#000" stroke-width="1.1" fill="none"/><path d="M3.5 7 H10.5 L7 11Z" fill="#000"/></svg><div style="position:absolute;left:1208px;top:182px;width:270px;height:685px;background:#e8e8f0;"></div><div style="position:absolute;left:1277px;top:182px;width:1px;height:685px;background:#e2e2ec;"></div><div style="position:absolute;left:1367px;top:182px;width:1px;height:685px;background:#e2e2ec;"></div><div style="position:absolute;left:1208px;top:182px;width:269px;height:18px;background:#e8e8f0;"></div><div style="position:absolute;left:1209px;top:186px;font-size:10.8px;line-height:1;color:#000;white-space:nowrap;">041</div><div style="position:absolute;left:1208px;top:200px;width:269px;height:18px;background:#cadaf6;"></div><div style="position:absolute;left:1209px;top:204px;font-size:10.8px;line-height:1;color:#000;white-space:nowrap;">041</div><div style="position:absolute;left:1208px;top:218px;width:269px;height:18px;background:#e8e8f0;"></div><div style="position:absolute;left:1209px;top:222px;font-size:10.8px;line-height:1;color:#000;white-space:nowrap;">041</div><div style="position:absolute;left:1208px;top:236px;width:269px;height:18px;background:#cadaf6;"></div><div style="position:absolute;left:1209px;top:240px;font-size:10.8px;line-height:1;color:#000;white-space:nowrap;">041</div><div style="position:absolute;left:1208px;top:254px;width:269px;height:18px;background:#e8e8f0;"></div><div style="position:absolute;left:1209px;top:258px;font-size:10.8px;line-height:1;color:#000;white-space:nowrap;">041</div><div style="position:absolute;left:1208px;top:272px;width:269px;height:18px;background:#3f80fb;"></div><div style="position:absolute;left:1209px;top:276px;font-size:10.8px;line-height:1;color:#fff;white-space:nowrap;">041</div><div style="position:absolute;left:1208px;top:290px;width:269px;height:18px;background:#e8e8f0;"></div><div style="position:absolute;left:1209px;top:294px;font-size:10.8px;line-height:1;color:#000;white-space:nowrap;">041</div><div style="position:absolute;left:1208px;top:308px;width:269px;height:18px;background:#cadaf6;"></div><div style="position:absolute;left:1209px;top:312px;font-size:10.8px;line-height:1;color:#000;white-space:nowrap;">043</div><div style="position:absolute;left:1478px;top:182px;width:17px;height:685px;background:#fdfdff;"></div><div style="position:absolute;left:1479px;top:184px;width:15px;height:16px;background:linear-gradient(#f4f4f8,#e4e4ea);"></div><svg style="position:absolute;left:1482px;top:188px" width="10" height="6" viewBox="0 0 10 6"><path d="M1 5 L5 1 L9 5" stroke="#d0d0d8" stroke-width="1.6" fill="none"/></svg><div style="position:absolute;left:1479px;top:850px;width:15px;height:16px;background:linear-gradient(#f4f4f8,#e4e4ea);"></div><svg style="position:absolute;left:1482px;top:855px" width="10" height="6" viewBox="0 0 10 6"><path d="M1 1 L5 5 L9 1" stroke="#d0d0d8" stroke-width="1.6" fill="none"/></svg><div style="position:absolute;left:1227px;top:182px;width:250px;height:140px;background:#f3f3fd;box-shadow:2px 3px 3px rgba(70,80,100,0.5);"></div><div style="position:absolute;left:1327px;top:871px;font-size:11.4px;line-height:1;color:#000;white-space:nowrap;">Anzahl: 8</div><div style="position:absolute;left:1207px;top:886px;width:290px;height:1px;background:#ffffff;"></div><svg style="position:absolute;left:1282px;top:892px" width="12" height="13" viewBox="0 0 12 13"><defs><linearGradient id="nb" x1="0" y1="0" x2="1" y2="1"><stop offset="0" stop-color="#a8ccf6"/><stop offset="1" stop-color="#4a84d8"/></linearGradient></defs><rect x="0.5" y="0.5" width="3" height="11.5" fill="url(#nb)" stroke="#1d55c4" stroke-width="1" stroke-linejoin="round"/><path d="M10.5 0.5 V12 L3.5 6.25Z" fill="url(#nb)" stroke="#1d55c4" stroke-width="1" stroke-linejoin="round"/></svg><svg style="position:absolute;left:1302px;top:892px" width="16" height="13" viewBox="0 0 16 13"><path d="M7.5 0.5 V12 L0.5 6.25Z M14.5 0.5 V12 L7.5 6.25Z" fill="url(#nb)" stroke="#1d55c4" stroke-width="1" stroke-linejoin="round"/></svg><svg style="position:absolute;left:1326px;top:892px" width="9" height="13" viewBox="0 0 9 13"><path d="M7.5 0.5 V12 L0.5 6.25Z" fill="url(#nb)" stroke="#1d55c4" stroke-width="1" stroke-linejoin="round"/></svg><svg style="position:absolute;left:1346px;top:892px" width="9" height="13" viewBox="0 0 9 13"><path d="M0.5 0.5 V12 L7.5 6.25Z" fill="url(#nb)" stroke="#1d55c4" stroke-width="1" stroke-linejoin="round"/></svg><svg style="position:absolute;left:1365px;top:892px" width="16" height="13" viewBox="0 0 16 13"><path d="M0.5 0.5 V12 L7.5 6.25Z M7.5 0.5 V12 L14.5 6.25Z" fill="url(#nb)" stroke="#1d55c4" stroke-width="1" stroke-linejoin="round"/></svg><svg style="position:absolute;left:1387px;top:892px" width="12" height="13" viewBox="0 0 12 13"><path d="M0.5 0.5 V12 L7.5 6.25Z" fill="url(#nb)" stroke="#1d55c4" stroke-width="1" stroke-linejoin="round"/><rect x="7.5" y="0.5" width="3" height="11.5" fill="url(#nb)" stroke="#1d55c4" stroke-width="1" stroke-linejoin="round"/></svg><svg style="position:absolute;left:1406px;top:890px" width="17" height="17" viewBox="0 0 17 17"><defs><linearGradient id="gr" x1="0" y1="0" x2="0" y2="1"><stop offset="0" stop-color="#9ad880"/><stop offset="1" stop-color="#3c9c34"/></linearGradient></defs><path d="M2.5 8.5 Q3 4 8 4 Q10 4 11.5 5" stroke="url(#gr)" stroke-width="2.8" fill="none"/><path d="M9.5 1.5 L15.5 3.5 L11.5 8.5Z" fill="#6cbc58"/><path d="M14.5 8.5 Q14 13 9 13 Q7 13 5.5 12" stroke="url(#gr)" stroke-width="2.8" fill="none"/><path d="M7.5 15.5 L1.5 13.5 L5.5 8.5Z" fill="#4aa83e"/></svg><div style="position:absolute;left:1207px;top:909px;width:290px;height:1px;background:#e0e0ea;"></div><div style="position:absolute;left:1502px;top:137px;width:1px;height:778px;background:#ffffff;"></div><div style="position:absolute;left:1503px;top:107px;width:1px;height:810px;background:#8fa2bf;"></div><div style="position:absolute;left:1504px;top:107px;width:2px;height:810px;background:#f6f6fc;"></div><div style="position:absolute;left:0px;top:915px;width:1503px;height:1px;background:#ffffff;"></div><div style="position:absolute;left:0px;top:916px;width:1504px;height:1px;background:#8fa0b8;"></div><div style="position:absolute;left:0px;top:917px;width:1506px;height:1px;background:#dcd8e4;"></div><div style="position:absolute;left:0px;top:918px;width:1506px;height:3px;background:#fdfdff;"></div><div style="position:absolute;left:0px;top:921px;width:1506px;height:18px;background:#f5f5fd;"></div><div style="position:absolute;left:0px;top:921px;width:1506px;height:1px;background:#7f9db9;"></div><div style="position:absolute;left:0px;top:926px;font-size:11.5px;line-height:1;color:#000;white-space:nowrap;">Administrator, Alle</div><div style="position:absolute;left:95px;top:922px;width:2px;height:17px;background:#7f9db9;"></div><div style="position:absolute;left:99px;top:926px;font-size:10.05px;line-height:1;color:#000;white-space:nowrap;">AGY, BSgew, GMS, BShaus, SBBZ, RS, GWRHS, AGY_priv</div><div style="position:absolute;left:1296px;top:922px;width:2px;height:17px;background:#7f9db9;"></div><div style="position:absolute;left:1303px;top:926px;font-size:10.9px;line-height:1;color:#000;white-space:nowrap;">Aktuelles Schuljahr: 2024/25</div><div style="position:absolute;left:1446px;top:922px;width:2px;height:17px;background:#7f9db9;"></div><div style="position:absolute;left:1450px;top:926px;font-size:10.9px;line-height:1;color:#000;white-space:nowrap;">12.03.2025</div><div class="ann" style="left:1244.8px;top:264.7px;width:29.4px;height:29.4px;line-height:29.4px;">1</div><div class="ann" style="left:37.8px;top:124.60000000000001px;width:29.4px;height:29.4px;line-height:29.4px;">2</div><div class="ann" style="left:146.8px;top:468.0px;width:29.4px;height:29.4px;line-height:29.4px;">3</div><div class="ann" style="left:172.8px;top:221.70000000000002px;width:29.4px;height:29.4px;line-height:29.4px;">4</div><div class="ann" style="left:172.8px;top:251.7px;width:29.4px;height:29.4px;line-height:29.4px;">5</div><div class="ann" style="left:568.8px;top:222.4px;width:29.4px;height:29.4px;line-height:29.4px;">6</div><div class="ann" style="left:568.8px;top:251.8px;width:29.4px;height:29.4px;line-height:29.4px;">7</div><div class="ann" style="left:964.0px;top:222.4px;width:29.4px;height:29.4px;line-height:29.4px;">8</div><div class="ann" style="left:964.8px;top:251.0px;width:29.4px;height:29.4px;line-height:29.4px;">9</div><div class="ann" style="left:1118.8px;top:313.7px;width:29.4px;height:29.4px;line-height:29.4px;">10</div><div class="ann" style="left:796.6999999999999px;top:164.8px;width:29.4px;height:29.4px;line-height:29.4px;">11</div>
</body></html>
